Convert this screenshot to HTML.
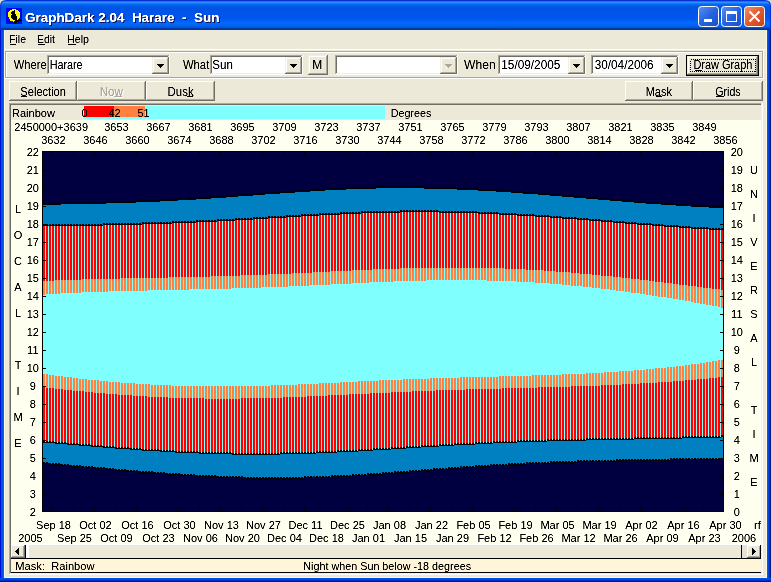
<!DOCTYPE html>
<html><head><meta charset="utf-8"><style>
html,body{margin:0;padding:0;width:771px;height:582px;overflow:hidden;background:#fff}
text{white-space:pre}
</style></head><body>
<svg width="771" height="582" viewBox="0 0 771 582" shape-rendering="crispEdges" style="position:absolute;left:0;top:0;font-family:'Liberation Sans', sans-serif">
<defs>
<linearGradient id="tb" x1="0" y1="0" x2="0" y2="1">
<stop offset="0" stop-color="#0058EE"/><stop offset="0.04" stop-color="#3593FF"/><stop offset="0.06" stop-color="#288EFF"/>
<stop offset="0.08" stop-color="#127DFF"/><stop offset="0.10" stop-color="#036FFC"/><stop offset="0.14" stop-color="#0262EE"/>
<stop offset="0.20" stop-color="#0057E5"/><stop offset="0.24" stop-color="#0054E3"/><stop offset="0.56" stop-color="#0055EB"/>
<stop offset="0.66" stop-color="#005BF5"/><stop offset="0.76" stop-color="#026AFE"/><stop offset="0.86" stop-color="#0062EF"/>
<stop offset="0.92" stop-color="#0052D6"/><stop offset="0.94" stop-color="#0040AB"/><stop offset="1" stop-color="#003092"/>
</linearGradient>
<linearGradient id="btn" x1="0" y1="0" x2="1" y2="1">
<stop offset="0" stop-color="#5C8FF5"/><stop offset="0.5" stop-color="#2663E0"/><stop offset="1" stop-color="#1C4FC8"/>
</linearGradient>
<linearGradient id="cls" x1="0" y1="0" x2="1" y2="1">
<stop offset="0" stop-color="#F09270"/><stop offset="0.5" stop-color="#E05A2E"/><stop offset="1" stop-color="#C8401C"/>
</linearGradient>
<filter id="cr" x="-5%" y="-20%" width="110%" height="140%"><feComponentTransfer><feFuncA type="linear" slope="1.6" intercept="-0.2"/></feComponentTransfer></filter>
</defs>
<rect x="0" y="0" width="771" height="582" fill="#FFFFFF"/>
<rect x="0" y="0" width="771" height="582" fill="#D8DCE4"/>
<path d="M0 6Q0 0 6 0H765Q771 0 771 6V582H0Z" fill="#0831D9" shape-rendering="auto"/>
<path d="M1 6Q1 1 6 1H765Q770 1 770 6V30H1Z" fill="url(#tb)" shape-rendering="auto"/>
<rect x="0" y="30" width="1" height="552" fill="#0010D0"/>
<rect x="1" y="30" width="1" height="552" fill="#0050E8"/>
<rect x="2" y="30" width="1" height="552" fill="#0050E8"/>
<rect x="3" y="30" width="1" height="552" fill="#1060F0"/>
<rect x="767" y="30" width="1" height="552" fill="#0A55F0"/>
<rect x="768" y="30" width="1" height="552" fill="#0045DC"/>
<rect x="769" y="30" width="1" height="552" fill="#0030B0"/>
<rect x="770" y="30" width="1" height="552" fill="#00188A"/>
<rect x="0" y="578" width="771" height="1" fill="#0050F0"/>
<rect x="0" y="579" width="771" height="1" fill="#0040E0"/>
<rect x="0" y="580" width="771" height="1" fill="#0030C0"/>
<rect x="0" y="581" width="771" height="1" fill="#001890"/>
<rect x="4" y="30" width="763" height="548" fill="#FFF8E0"/>
<rect x="5" y="30" width="761" height="547" fill="#ECE9D8"/>
<rect x="6" y="8" width="16" height="16" fill="#0000F8"/>
<rect x="12" y="9" width="1" height="1" fill="#FFFF00"/>
<rect x="13" y="9" width="1" height="1" fill="#FFFF00"/>
<rect x="14" y="9" width="1" height="1" fill="#FFFF00"/>
<rect x="15" y="9" width="1" height="1" fill="#FFFF00"/>
<rect x="10" y="10" width="1" height="1" fill="#FFFF00"/>
<rect x="11" y="10" width="1" height="1" fill="#FFFF00"/>
<rect x="12" y="10" width="1" height="1" fill="#FFFF00"/>
<rect x="13" y="10" width="1" height="1" fill="#FFFF00"/>
<rect x="14" y="10" width="1" height="1" fill="#000000"/>
<rect x="15" y="10" width="1" height="1" fill="#FFFF00"/>
<rect x="16" y="10" width="1" height="1" fill="#FFFF00"/>
<rect x="17" y="10" width="1" height="1" fill="#FFFF00"/>
<rect x="9" y="11" width="1" height="1" fill="#FFFF00"/>
<rect x="10" y="11" width="1" height="1" fill="#FFFF00"/>
<rect x="11" y="11" width="1" height="1" fill="#FFFF00"/>
<rect x="12" y="11" width="1" height="1" fill="#000000"/>
<rect x="13" y="11" width="1" height="1" fill="#000000"/>
<rect x="14" y="11" width="1" height="1" fill="#000000"/>
<rect x="15" y="11" width="1" height="1" fill="#FFFF00"/>
<rect x="16" y="11" width="1" height="1" fill="#FFFF00"/>
<rect x="17" y="11" width="1" height="1" fill="#FFFF00"/>
<rect x="18" y="11" width="1" height="1" fill="#FFFF00"/>
<rect x="8" y="12" width="1" height="1" fill="#FFFF00"/>
<rect x="9" y="12" width="1" height="1" fill="#FFFF00"/>
<rect x="10" y="12" width="1" height="1" fill="#FFFF00"/>
<rect x="11" y="12" width="1" height="1" fill="#000000"/>
<rect x="12" y="12" width="1" height="1" fill="#000000"/>
<rect x="13" y="12" width="1" height="1" fill="#000000"/>
<rect x="14" y="12" width="1" height="1" fill="#000000"/>
<rect x="15" y="12" width="1" height="1" fill="#FFFF00"/>
<rect x="16" y="12" width="1" height="1" fill="#FFFF00"/>
<rect x="17" y="12" width="1" height="1" fill="#FFFF00"/>
<rect x="18" y="12" width="1" height="1" fill="#FFFF00"/>
<rect x="19" y="12" width="1" height="1" fill="#FFFF00"/>
<rect x="8" y="13" width="1" height="1" fill="#FFFF00"/>
<rect x="9" y="13" width="1" height="1" fill="#FFFF00"/>
<rect x="10" y="13" width="1" height="1" fill="#FFFF00"/>
<rect x="11" y="13" width="1" height="1" fill="#000000"/>
<rect x="12" y="13" width="1" height="1" fill="#000000"/>
<rect x="13" y="13" width="1" height="1" fill="#000000"/>
<rect x="14" y="13" width="1" height="1" fill="#000000"/>
<rect x="15" y="13" width="1" height="1" fill="#FFFF00"/>
<rect x="16" y="13" width="1" height="1" fill="#FFFF00"/>
<rect x="17" y="13" width="1" height="1" fill="#FFFF00"/>
<rect x="18" y="13" width="1" height="1" fill="#FFFF00"/>
<rect x="19" y="13" width="1" height="1" fill="#FFFF00"/>
<rect x="8" y="14" width="1" height="1" fill="#FFFF00"/>
<rect x="9" y="14" width="1" height="1" fill="#FFFF00"/>
<rect x="10" y="14" width="1" height="1" fill="#FFFF00"/>
<rect x="11" y="14" width="1" height="1" fill="#FFFF00"/>
<rect x="12" y="14" width="1" height="1" fill="#000000"/>
<rect x="13" y="14" width="1" height="1" fill="#000000"/>
<rect x="14" y="14" width="1" height="1" fill="#000000"/>
<rect x="15" y="14" width="1" height="1" fill="#000000"/>
<rect x="16" y="14" width="1" height="1" fill="#FFFF00"/>
<rect x="17" y="14" width="1" height="1" fill="#FFFF00"/>
<rect x="18" y="14" width="1" height="1" fill="#FFFF00"/>
<rect x="19" y="14" width="1" height="1" fill="#FFFF00"/>
<rect x="8" y="15" width="1" height="1" fill="#FFFF00"/>
<rect x="9" y="15" width="1" height="1" fill="#FFFF00"/>
<rect x="10" y="15" width="1" height="1" fill="#FFFF00"/>
<rect x="11" y="15" width="1" height="1" fill="#000000"/>
<rect x="12" y="15" width="1" height="1" fill="#000000"/>
<rect x="13" y="15" width="1" height="1" fill="#000000"/>
<rect x="14" y="15" width="1" height="1" fill="#000000"/>
<rect x="15" y="15" width="1" height="1" fill="#000000"/>
<rect x="16" y="15" width="1" height="1" fill="#FFFF00"/>
<rect x="17" y="15" width="1" height="1" fill="#FFFF00"/>
<rect x="18" y="15" width="1" height="1" fill="#FFFF00"/>
<rect x="19" y="15" width="1" height="1" fill="#FFFF00"/>
<rect x="8" y="16" width="1" height="1" fill="#FFFF00"/>
<rect x="9" y="16" width="1" height="1" fill="#FFFF00"/>
<rect x="10" y="16" width="1" height="1" fill="#FFFF00"/>
<rect x="11" y="16" width="1" height="1" fill="#000000"/>
<rect x="12" y="16" width="1" height="1" fill="#000000"/>
<rect x="13" y="16" width="1" height="1" fill="#000000"/>
<rect x="14" y="16" width="1" height="1" fill="#000000"/>
<rect x="15" y="16" width="1" height="1" fill="#000000"/>
<rect x="16" y="16" width="1" height="1" fill="#000000"/>
<rect x="17" y="16" width="1" height="1" fill="#FFFF00"/>
<rect x="18" y="16" width="1" height="1" fill="#FFFF00"/>
<rect x="19" y="16" width="1" height="1" fill="#FFFF00"/>
<rect x="9" y="17" width="1" height="1" fill="#FFFF00"/>
<rect x="10" y="17" width="1" height="1" fill="#FFFF00"/>
<rect x="11" y="17" width="1" height="1" fill="#000000"/>
<rect x="12" y="17" width="1" height="1" fill="#000000"/>
<rect x="13" y="17" width="1" height="1" fill="#000000"/>
<rect x="14" y="17" width="1" height="1" fill="#000000"/>
<rect x="15" y="17" width="1" height="1" fill="#000000"/>
<rect x="16" y="17" width="1" height="1" fill="#000000"/>
<rect x="17" y="17" width="1" height="1" fill="#FFFF00"/>
<rect x="18" y="17" width="1" height="1" fill="#FFFF00"/>
<rect x="19" y="17" width="1" height="1" fill="#FFFF00"/>
<rect x="9" y="18" width="1" height="1" fill="#FFFF00"/>
<rect x="10" y="18" width="1" height="1" fill="#FFFF00"/>
<rect x="11" y="18" width="1" height="1" fill="#FFFF00"/>
<rect x="12" y="18" width="1" height="1" fill="#000000"/>
<rect x="13" y="18" width="1" height="1" fill="#000000"/>
<rect x="14" y="18" width="1" height="1" fill="#000000"/>
<rect x="15" y="18" width="1" height="1" fill="#000000"/>
<rect x="16" y="18" width="1" height="1" fill="#000000"/>
<rect x="17" y="18" width="1" height="1" fill="#FFFF00"/>
<rect x="18" y="18" width="1" height="1" fill="#FFFF00"/>
<rect x="10" y="19" width="1" height="1" fill="#FFFF00"/>
<rect x="11" y="19" width="1" height="1" fill="#FFFF00"/>
<rect x="12" y="19" width="1" height="1" fill="#FFFF00"/>
<rect x="13" y="19" width="1" height="1" fill="#000000"/>
<rect x="14" y="19" width="1" height="1" fill="#000000"/>
<rect x="15" y="19" width="1" height="1" fill="#000000"/>
<rect x="16" y="19" width="1" height="1" fill="#000000"/>
<rect x="17" y="19" width="1" height="1" fill="#FFFF00"/>
<rect x="10" y="20" width="1" height="1" fill="#FFFF00"/>
<rect x="11" y="20" width="1" height="1" fill="#FFFF00"/>
<rect x="12" y="20" width="1" height="1" fill="#FFFF00"/>
<rect x="13" y="20" width="1" height="1" fill="#FFFF00"/>
<rect x="14" y="20" width="1" height="1" fill="#FFFF00"/>
<rect x="15" y="20" width="1" height="1" fill="#000000"/>
<rect x="16" y="20" width="1" height="1" fill="#000000"/>
<rect x="17" y="20" width="1" height="1" fill="#000000"/>
<rect x="18" y="20" width="1" height="1" fill="#000000"/>
<rect x="19" y="20" width="1" height="1" fill="#000000"/>
<rect x="20" y="20" width="1" height="1" fill="#000000"/>
<rect x="21" y="20" width="1" height="1" fill="#000000"/>
<rect x="8" y="21" width="1" height="1" fill="#000000"/>
<rect x="13" y="21" width="1" height="1" fill="#FFFF00"/>
<rect x="14" y="21" width="1" height="1" fill="#000000"/>
<rect x="15" y="21" width="1" height="1" fill="#000000"/>
<rect x="16" y="21" width="1" height="1" fill="#000000"/>
<rect x="17" y="21" width="1" height="1" fill="#000000"/>
<rect x="18" y="21" width="1" height="1" fill="#000000"/>
<rect x="14" y="22" width="1" height="1" fill="#000000"/>
<rect x="15" y="22" width="1" height="1" fill="#000000"/>
<rect x="16" y="22" width="1" height="1" fill="#000000"/>
<rect x="15" y="23" width="1" height="1" fill="#000000"/>
<text x="26.00" y="23" font-size="13" fill="#0A1864" font-weight="bold" textLength="194.36" lengthAdjust="spacingAndGlyphs" filter="url(#cr)">GraphDark 2.04  Harare  -  Sun</text>
<text x="25.00" y="22" font-size="13" fill="#FFFFFF" font-weight="bold" textLength="194.36" lengthAdjust="spacingAndGlyphs" filter="url(#cr)">GraphDark 2.04  Harare  -  Sun</text>
<rect x="698.5" y="6.5" width="20" height="20" rx="3" fill="url(#btn)" stroke="#FFFFFF" stroke-width="1" shape-rendering="auto"/>
<rect x="721.5" y="6.5" width="20" height="20" rx="3" fill="url(#btn)" stroke="#FFFFFF" stroke-width="1" shape-rendering="auto"/>
<rect x="744.5" y="6.5" width="20" height="20" rx="3" fill="url(#cls)" stroke="#FFFFFF" stroke-width="1" shape-rendering="auto"/>
<rect x="704" y="19" width="8" height="3" fill="#FFFFFF"/>
<rect x="726.5" y="11.5" width="10" height="10" fill="none" stroke="#FFFFFF" stroke-width="1"/>
<rect x="727" y="11" width="10" height="3" fill="#FFFFFF"/>
<path d="M749.5 11.5l10 10M759.5 11.5l-10 10" stroke="#FFFFFF" stroke-width="2" shape-rendering="auto"/>
<text x="9.00" y="43" font-size="11" fill="#000" font-weight="normal" textLength="17.00" lengthAdjust="spacingAndGlyphs" filter="url(#cr)">File</text>
<text x="37.00" y="43" font-size="11" fill="#000" font-weight="normal" textLength="18.00" lengthAdjust="spacingAndGlyphs" filter="url(#cr)">Edit</text>
<text x="67.00" y="43" font-size="11" fill="#000" font-weight="normal" textLength="22.00" lengthAdjust="spacingAndGlyphs" filter="url(#cr)">Help</text>
<rect x="10" y="44" width="6" height="1" fill="#000"/>
<rect x="38" y="44" width="7" height="1" fill="#000"/>
<rect x="68" y="44" width="8" height="1" fill="#000"/>
<rect x="4" y="49" width="763" height="1" fill="#FFFFFF"/>
<rect x="5" y="51" width="758" height="1" fill="#ACA899"/>
<rect x="5" y="51" width="1" height="27" fill="#ACA899"/>
<rect x="6" y="52" width="757" height="1" fill="#FFFFFF"/>
<rect x="6" y="52" width="1" height="26" fill="#FFFFFF"/>
<rect x="5" y="77" width="758" height="1" fill="#ACA899"/>
<rect x="762" y="51" width="1" height="27" fill="#ACA899"/>
<rect x="5" y="78" width="759" height="1" fill="#FFFFFF"/>
<rect x="763" y="51" width="1" height="28" fill="#FFFFFF"/>
<text x="13.72" y="69" font-size="12" fill="#000" font-weight="normal" textLength="32.88" lengthAdjust="spacingAndGlyphs" filter="url(#cr)">Where</text>
<rect x="47" y="55" width="123" height="20" fill="#FFFFFF"/>
<rect x="47" y="55" width="123" height="1" fill="#ACA899"/>
<rect x="47" y="55" width="1" height="20" fill="#ACA899"/>
<rect x="48" y="56" width="121" height="1" fill="#716F64"/>
<rect x="48" y="56" width="1" height="18" fill="#716F64"/>
<rect x="47" y="74" width="123" height="1" fill="#FFFFFF"/>
<rect x="169" y="55" width="1" height="20" fill="#FFFFFF"/>
<rect x="48" y="73" width="121" height="1" fill="#F1EFE2"/>
<rect x="168" y="56" width="1" height="18" fill="#F1EFE2"/>
<rect x="152" y="57" width="17" height="17" fill="#ECE9D8"/>
<rect x="152" y="57" width="17" height="1" fill="#F1EFE2"/>
<rect x="152" y="57" width="1" height="17" fill="#F1EFE2"/>
<rect x="152" y="73" width="17" height="1" fill="#716F64"/>
<rect x="168" y="57" width="1" height="17" fill="#716F64"/>
<rect x="153" y="58" width="15" height="1" fill="#FFFFFF"/>
<rect x="153" y="58" width="1" height="15" fill="#FFFFFF"/>
<rect x="153" y="72" width="15" height="1" fill="#ACA899"/>
<rect x="167" y="58" width="1" height="15" fill="#ACA899"/>
<rect x="157" y="64" width="7" height="1" fill="#000"/>
<rect x="158" y="65" width="5" height="1" fill="#000"/>
<rect x="159" y="66" width="3" height="1" fill="#000"/>
<rect x="160" y="67" width="1" height="1" fill="#000"/>
<text x="49.64" y="69" font-size="12" fill="#000" font-weight="normal" textLength="33.00" lengthAdjust="spacingAndGlyphs" filter="url(#cr)">Harare</text>
<text x="182.96" y="69" font-size="12" fill="#000" font-weight="normal" textLength="26.32" lengthAdjust="spacingAndGlyphs" filter="url(#cr)">What</text>
<rect x="210" y="55" width="93" height="20" fill="#FFFFFF"/>
<rect x="210" y="55" width="93" height="1" fill="#ACA899"/>
<rect x="210" y="55" width="1" height="20" fill="#ACA899"/>
<rect x="211" y="56" width="91" height="1" fill="#716F64"/>
<rect x="211" y="56" width="1" height="18" fill="#716F64"/>
<rect x="210" y="74" width="93" height="1" fill="#FFFFFF"/>
<rect x="302" y="55" width="1" height="20" fill="#FFFFFF"/>
<rect x="211" y="73" width="91" height="1" fill="#F1EFE2"/>
<rect x="301" y="56" width="1" height="18" fill="#F1EFE2"/>
<rect x="285" y="57" width="17" height="17" fill="#ECE9D8"/>
<rect x="285" y="57" width="17" height="1" fill="#F1EFE2"/>
<rect x="285" y="57" width="1" height="17" fill="#F1EFE2"/>
<rect x="285" y="73" width="17" height="1" fill="#716F64"/>
<rect x="301" y="57" width="1" height="17" fill="#716F64"/>
<rect x="286" y="58" width="15" height="1" fill="#FFFFFF"/>
<rect x="286" y="58" width="1" height="15" fill="#FFFFFF"/>
<rect x="286" y="72" width="15" height="1" fill="#ACA899"/>
<rect x="300" y="58" width="1" height="15" fill="#ACA899"/>
<rect x="290" y="64" width="7" height="1" fill="#000"/>
<rect x="291" y="65" width="5" height="1" fill="#000"/>
<rect x="292" y="66" width="3" height="1" fill="#000"/>
<rect x="293" y="67" width="1" height="1" fill="#000"/>
<text x="212.36" y="69" font-size="12" fill="#000" font-weight="normal" textLength="20.64" lengthAdjust="spacingAndGlyphs" filter="url(#cr)">Sun</text>
<rect x="308" y="55" width="20" height="20" fill="#ECE9D8"/>
<rect x="308" y="55" width="20" height="1" fill="#F1EFE2"/>
<rect x="308" y="55" width="1" height="20" fill="#F1EFE2"/>
<rect x="308" y="74" width="20" height="1" fill="#716F64"/>
<rect x="327" y="55" width="1" height="20" fill="#716F64"/>
<rect x="309" y="56" width="18" height="1" fill="#FFFFFF"/>
<rect x="309" y="56" width="1" height="18" fill="#FFFFFF"/>
<rect x="309" y="73" width="18" height="1" fill="#ACA899"/>
<rect x="326" y="56" width="1" height="18" fill="#ACA899"/>
<text x="312.32" y="69" font-size="12" fill="#000" font-weight="normal" textLength="10.04" lengthAdjust="spacingAndGlyphs" filter="url(#cr)">M</text>
<rect x="335" y="55" width="123" height="20" fill="#FFFFFF"/>
<rect x="335" y="55" width="123" height="1" fill="#ACA899"/>
<rect x="335" y="55" width="1" height="20" fill="#ACA899"/>
<rect x="336" y="56" width="121" height="1" fill="#716F64"/>
<rect x="336" y="56" width="1" height="18" fill="#716F64"/>
<rect x="335" y="74" width="123" height="1" fill="#FFFFFF"/>
<rect x="457" y="55" width="1" height="20" fill="#FFFFFF"/>
<rect x="336" y="73" width="121" height="1" fill="#F1EFE2"/>
<rect x="456" y="56" width="1" height="18" fill="#F1EFE2"/>
<rect x="440" y="57" width="17" height="17" fill="#ECE9D8"/>
<rect x="440" y="57" width="17" height="1" fill="#F1EFE2"/>
<rect x="440" y="57" width="1" height="17" fill="#F1EFE2"/>
<rect x="440" y="73" width="17" height="1" fill="#716F64"/>
<rect x="456" y="57" width="1" height="17" fill="#716F64"/>
<rect x="441" y="58" width="15" height="1" fill="#FFFFFF"/>
<rect x="441" y="58" width="1" height="15" fill="#FFFFFF"/>
<rect x="441" y="72" width="15" height="1" fill="#ACA899"/>
<rect x="455" y="58" width="1" height="15" fill="#ACA899"/>
<rect x="445" y="64" width="7" height="1" fill="#ACA899"/>
<rect x="446" y="65" width="5" height="1" fill="#ACA899"/>
<rect x="447" y="66" width="3" height="1" fill="#ACA899"/>
<rect x="448" y="67" width="1" height="1" fill="#ACA899"/>
<rect x="446" y="68" width="1" height="1" fill="#FFFFFF"/>
<rect x="449" y="67" width="1" height="1" fill="#FFFFFF"/>
<text x="464.08" y="69" font-size="12" fill="#000" font-weight="normal" textLength="31.56" lengthAdjust="spacingAndGlyphs" filter="url(#cr)">When</text>
<rect x="498" y="55" width="88" height="20" fill="#FFFFFF"/>
<rect x="498" y="55" width="88" height="1" fill="#ACA899"/>
<rect x="498" y="55" width="1" height="20" fill="#ACA899"/>
<rect x="499" y="56" width="86" height="1" fill="#716F64"/>
<rect x="499" y="56" width="1" height="18" fill="#716F64"/>
<rect x="498" y="74" width="88" height="1" fill="#FFFFFF"/>
<rect x="585" y="55" width="1" height="20" fill="#FFFFFF"/>
<rect x="499" y="73" width="86" height="1" fill="#F1EFE2"/>
<rect x="584" y="56" width="1" height="18" fill="#F1EFE2"/>
<rect x="568" y="57" width="17" height="17" fill="#ECE9D8"/>
<rect x="568" y="57" width="17" height="1" fill="#F1EFE2"/>
<rect x="568" y="57" width="1" height="17" fill="#F1EFE2"/>
<rect x="568" y="73" width="17" height="1" fill="#716F64"/>
<rect x="584" y="57" width="1" height="17" fill="#716F64"/>
<rect x="569" y="58" width="15" height="1" fill="#FFFFFF"/>
<rect x="569" y="58" width="1" height="15" fill="#FFFFFF"/>
<rect x="569" y="72" width="15" height="1" fill="#ACA899"/>
<rect x="583" y="58" width="1" height="15" fill="#ACA899"/>
<rect x="573" y="64" width="7" height="1" fill="#000"/>
<rect x="574" y="65" width="5" height="1" fill="#000"/>
<rect x="575" y="66" width="3" height="1" fill="#000"/>
<rect x="576" y="67" width="1" height="1" fill="#000"/>
<text x="501.32" y="69" font-size="12" fill="#000" font-weight="normal" textLength="59.04" lengthAdjust="spacingAndGlyphs" filter="url(#cr)">15/09/2005</text>
<rect x="591" y="55" width="88" height="20" fill="#FFFFFF"/>
<rect x="591" y="55" width="88" height="1" fill="#ACA899"/>
<rect x="591" y="55" width="1" height="20" fill="#ACA899"/>
<rect x="592" y="56" width="86" height="1" fill="#716F64"/>
<rect x="592" y="56" width="1" height="18" fill="#716F64"/>
<rect x="591" y="74" width="88" height="1" fill="#FFFFFF"/>
<rect x="678" y="55" width="1" height="20" fill="#FFFFFF"/>
<rect x="592" y="73" width="86" height="1" fill="#F1EFE2"/>
<rect x="677" y="56" width="1" height="18" fill="#F1EFE2"/>
<rect x="661" y="57" width="17" height="17" fill="#ECE9D8"/>
<rect x="661" y="57" width="17" height="1" fill="#F1EFE2"/>
<rect x="661" y="57" width="1" height="17" fill="#F1EFE2"/>
<rect x="661" y="73" width="17" height="1" fill="#716F64"/>
<rect x="677" y="57" width="1" height="17" fill="#716F64"/>
<rect x="662" y="58" width="15" height="1" fill="#FFFFFF"/>
<rect x="662" y="58" width="1" height="15" fill="#FFFFFF"/>
<rect x="662" y="72" width="15" height="1" fill="#ACA899"/>
<rect x="676" y="58" width="1" height="15" fill="#ACA899"/>
<rect x="666" y="64" width="7" height="1" fill="#000"/>
<rect x="667" y="65" width="5" height="1" fill="#000"/>
<rect x="668" y="66" width="3" height="1" fill="#000"/>
<rect x="669" y="67" width="1" height="1" fill="#000"/>
<text x="594.68" y="69" font-size="12" fill="#000" font-weight="normal" textLength="58.96" lengthAdjust="spacingAndGlyphs" filter="url(#cr)">30/04/2006</text>
<rect x="686" y="55" width="73" height="21" fill="#000"/>
<rect x="687" y="56" width="71" height="19" fill="#ECE9D8"/>
<rect x="687" y="56" width="71" height="1" fill="#F1EFE2"/>
<rect x="687" y="56" width="1" height="19" fill="#F1EFE2"/>
<rect x="687" y="74" width="71" height="1" fill="#716F64"/>
<rect x="757" y="56" width="1" height="19" fill="#716F64"/>
<rect x="688" y="57" width="69" height="1" fill="#FFFFFF"/>
<rect x="688" y="57" width="1" height="17" fill="#FFFFFF"/>
<rect x="688" y="73" width="69" height="1" fill="#ACA899"/>
<rect x="756" y="57" width="1" height="17" fill="#ACA899"/>
<rect x="690.5" y="59.5" width="65" height="12" fill="none" stroke="#000" stroke-dasharray="1 1" stroke-width="1"/>
<text x="693.42" y="69" font-size="12" fill="#000" font-weight="normal" textLength="58.94" lengthAdjust="spacingAndGlyphs" filter="url(#cr)">Draw Graph</text>
<rect x="695" y="70" width="7" height="1" fill="#000"/>
<rect x="9" y="81" width="68" height="20" fill="#ECE9D8"/>
<rect x="9" y="81" width="68" height="1" fill="#FFFFFF"/>
<rect x="9" y="81" width="1" height="20" fill="#FFFFFF"/>
<rect x="9" y="100" width="68" height="1" fill="#716F64"/>
<rect x="76" y="81" width="1" height="20" fill="#716F64"/>
<rect x="10" y="99" width="66" height="1" fill="#ACA899"/>
<rect x="75" y="82" width="1" height="18" fill="#ACA899"/>
<text x="20.36" y="96" font-size="12" fill="#000" font-weight="normal" textLength="45.60" lengthAdjust="spacingAndGlyphs" filter="url(#cr)">Selection</text>
<rect x="21" y="96" width="6" height="1" fill="#000"/>
<rect x="77" y="81" width="69" height="20" fill="#ECE9D8"/>
<rect x="77" y="81" width="69" height="1" fill="#FFFFFF"/>
<rect x="77" y="81" width="1" height="20" fill="#FFFFFF"/>
<rect x="77" y="100" width="69" height="1" fill="#716F64"/>
<rect x="145" y="81" width="1" height="20" fill="#716F64"/>
<rect x="78" y="99" width="67" height="1" fill="#ACA899"/>
<rect x="144" y="82" width="1" height="18" fill="#ACA899"/>
<text x="100.68" y="97" font-size="12" fill="#FFFFFF" font-weight="normal" textLength="23.32" lengthAdjust="spacingAndGlyphs" filter="url(#cr)">Now</text>
<text x="99.68" y="96" font-size="12" fill="#ACA899" font-weight="normal" textLength="23.32" lengthAdjust="spacingAndGlyphs" filter="url(#cr)">Now</text>
<rect x="115" y="97" width="8" height="1" fill="#FFFFFF"/>
<rect x="114" y="96" width="8" height="1" fill="#ACA899"/>
<rect x="146" y="81" width="69" height="20" fill="#ECE9D8"/>
<rect x="146" y="81" width="69" height="1" fill="#FFFFFF"/>
<rect x="146" y="81" width="1" height="20" fill="#FFFFFF"/>
<rect x="146" y="100" width="69" height="1" fill="#716F64"/>
<rect x="214" y="81" width="1" height="20" fill="#716F64"/>
<rect x="147" y="99" width="67" height="1" fill="#ACA899"/>
<rect x="213" y="82" width="1" height="18" fill="#ACA899"/>
<text x="167.60" y="96" font-size="12" fill="#000" font-weight="normal" textLength="26.00" lengthAdjust="spacingAndGlyphs" filter="url(#cr)">Dusk</text>
<rect x="187" y="96" width="6" height="1" fill="#000"/>
<rect x="625" y="81" width="68" height="20" fill="#ECE9D8"/>
<rect x="625" y="81" width="68" height="1" fill="#FFFFFF"/>
<rect x="625" y="81" width="1" height="20" fill="#FFFFFF"/>
<rect x="625" y="100" width="68" height="1" fill="#716F64"/>
<rect x="692" y="81" width="1" height="20" fill="#716F64"/>
<rect x="626" y="99" width="66" height="1" fill="#ACA899"/>
<rect x="691" y="82" width="1" height="18" fill="#ACA899"/>
<text x="645.64" y="96" font-size="12" fill="#000" font-weight="normal" textLength="26.36" lengthAdjust="spacingAndGlyphs" filter="url(#cr)">Mask</text>
<rect x="656" y="96" width="6" height="1" fill="#000"/>
<rect x="693" y="81" width="70" height="20" fill="#ECE9D8"/>
<rect x="693" y="81" width="70" height="1" fill="#FFFFFF"/>
<rect x="693" y="81" width="1" height="20" fill="#FFFFFF"/>
<rect x="693" y="100" width="70" height="1" fill="#716F64"/>
<rect x="762" y="81" width="1" height="20" fill="#716F64"/>
<rect x="694" y="99" width="68" height="1" fill="#ACA899"/>
<rect x="761" y="82" width="1" height="18" fill="#ACA899"/>
<text x="715.28" y="96" font-size="12" fill="#000" font-weight="normal" textLength="25.36" lengthAdjust="spacingAndGlyphs" filter="url(#cr)">Grids</text>
<rect x="716" y="96" width="8" height="1" fill="#000"/>
<rect x="9" y="103" width="754" height="472" fill="#FFFFFF"/>
<rect x="9" y="103" width="753" height="471" fill="#ACA899"/>
<rect x="10" y="104" width="752" height="470" fill="#F1EFE2"/>
<rect x="10" y="104" width="751" height="469" fill="#716F64"/>
<rect x="11" y="105" width="750" height="468" fill="#FFFFF0"/>
<rect x="11" y="105" width="750" height="15" fill="#ECE9D8"/>
<text x="12.00" y="117" font-size="11" fill="#000" font-weight="normal" textLength="42.92" lengthAdjust="spacingAndGlyphs" filter="url(#cr)">Rainbow</text>
<rect x="84" y="106" width="301" height="13" fill="#80FFFF"/>
<rect x="84" y="106" width="30" height="11" fill="#FF0000"/>
<rect x="114" y="106" width="31" height="11" fill="#FF8040"/>
<text x="84.5" y="117" font-size="11" text-anchor="middle" fill="#000" font-weight="normal" filter="url(#cr)" >0</text>
<text x="114.5" y="117" font-size="11" text-anchor="middle" fill="#000" font-weight="normal" filter="url(#cr)" >42</text>
<text x="143.5" y="117" font-size="11" text-anchor="middle" fill="#000" font-weight="normal" filter="url(#cr)" >51</text>
<text x="390.64" y="117" font-size="11" fill="#000" font-weight="normal" textLength="40.68" lengthAdjust="spacingAndGlyphs" filter="url(#cr)">Degrees</text>
<text x="88" y="131" font-size="11" text-anchor="end" fill="#000" font-weight="normal" filter="url(#cr)" >2450000+3639</text>
<text x="116.5" y="131" font-size="11" text-anchor="middle" fill="#000" font-weight="normal" filter="url(#cr)" >3653</text>
<text x="158.5" y="131" font-size="11" text-anchor="middle" fill="#000" font-weight="normal" filter="url(#cr)" >3667</text>
<text x="200.5" y="131" font-size="11" text-anchor="middle" fill="#000" font-weight="normal" filter="url(#cr)" >3681</text>
<text x="242.5" y="131" font-size="11" text-anchor="middle" fill="#000" font-weight="normal" filter="url(#cr)" >3695</text>
<text x="284.5" y="131" font-size="11" text-anchor="middle" fill="#000" font-weight="normal" filter="url(#cr)" >3709</text>
<text x="326.5" y="131" font-size="11" text-anchor="middle" fill="#000" font-weight="normal" filter="url(#cr)" >3723</text>
<text x="368.5" y="131" font-size="11" text-anchor="middle" fill="#000" font-weight="normal" filter="url(#cr)" >3737</text>
<text x="410.5" y="131" font-size="11" text-anchor="middle" fill="#000" font-weight="normal" filter="url(#cr)" >3751</text>
<text x="452.5" y="131" font-size="11" text-anchor="middle" fill="#000" font-weight="normal" filter="url(#cr)" >3765</text>
<text x="494.5" y="131" font-size="11" text-anchor="middle" fill="#000" font-weight="normal" filter="url(#cr)" >3779</text>
<text x="536.5" y="131" font-size="11" text-anchor="middle" fill="#000" font-weight="normal" filter="url(#cr)" >3793</text>
<text x="578.5" y="131" font-size="11" text-anchor="middle" fill="#000" font-weight="normal" filter="url(#cr)" >3807</text>
<text x="620.5" y="131" font-size="11" text-anchor="middle" fill="#000" font-weight="normal" filter="url(#cr)" >3821</text>
<text x="662.5" y="131" font-size="11" text-anchor="middle" fill="#000" font-weight="normal" filter="url(#cr)" >3835</text>
<text x="704.5" y="131" font-size="11" text-anchor="middle" fill="#000" font-weight="normal" filter="url(#cr)" >3849</text>
<text x="53.5" y="144" font-size="11" text-anchor="middle" fill="#000" font-weight="normal" filter="url(#cr)" >3632</text>
<text x="95.5" y="144" font-size="11" text-anchor="middle" fill="#000" font-weight="normal" filter="url(#cr)" >3646</text>
<text x="137.5" y="144" font-size="11" text-anchor="middle" fill="#000" font-weight="normal" filter="url(#cr)" >3660</text>
<text x="179.5" y="144" font-size="11" text-anchor="middle" fill="#000" font-weight="normal" filter="url(#cr)" >3674</text>
<text x="221.5" y="144" font-size="11" text-anchor="middle" fill="#000" font-weight="normal" filter="url(#cr)" >3688</text>
<text x="263.5" y="144" font-size="11" text-anchor="middle" fill="#000" font-weight="normal" filter="url(#cr)" >3702</text>
<text x="305.5" y="144" font-size="11" text-anchor="middle" fill="#000" font-weight="normal" filter="url(#cr)" >3716</text>
<text x="347.5" y="144" font-size="11" text-anchor="middle" fill="#000" font-weight="normal" filter="url(#cr)" >3730</text>
<text x="389.5" y="144" font-size="11" text-anchor="middle" fill="#000" font-weight="normal" filter="url(#cr)" >3744</text>
<text x="431.5" y="144" font-size="11" text-anchor="middle" fill="#000" font-weight="normal" filter="url(#cr)" >3758</text>
<text x="473.5" y="144" font-size="11" text-anchor="middle" fill="#000" font-weight="normal" filter="url(#cr)" >3772</text>
<text x="515.5" y="144" font-size="11" text-anchor="middle" fill="#000" font-weight="normal" filter="url(#cr)" >3786</text>
<text x="557.5" y="144" font-size="11" text-anchor="middle" fill="#000" font-weight="normal" filter="url(#cr)" >3800</text>
<text x="599.5" y="144" font-size="11" text-anchor="middle" fill="#000" font-weight="normal" filter="url(#cr)" >3814</text>
<text x="641.5" y="144" font-size="11" text-anchor="middle" fill="#000" font-weight="normal" filter="url(#cr)" >3828</text>
<text x="683.5" y="144" font-size="11" text-anchor="middle" fill="#000" font-weight="normal" filter="url(#cr)" >3842</text>
<text x="725.5" y="144" font-size="11" text-anchor="middle" fill="#000" font-weight="normal" filter="url(#cr)" >3856</text>
<g>
<rect x="42" y="151" width="682" height="361" fill="#000000"/>
<rect x="43" y="152" width="680" height="359" fill="#000040"/>
<path fill="#0080C0" d="M43 205h3v258h-3zM46 205h3v258h-3zM49 205h3v259h-3zM52 205h3v259h-3zM55 205h3v259h-3zM58 205h3v259h-3zM61 204h3v261h-3zM64 204h3v261h-3zM67 204h3v261h-3zM70 204h3v262h-3zM73 204h3v262h-3zM76 204h3v262h-3zM79 204h3v262h-3zM82 204h3v263h-3zM85 204h3v263h-3zM88 204h3v263h-3zM91 204h3v263h-3zM94 204h3v264h-3zM97 204h3v264h-3zM100 204h3v264h-3zM103 204h3v264h-3zM106 203h3v266h-3zM109 203h3v266h-3zM112 203h3v266h-3zM115 203h3v267h-3zM118 203h3v267h-3zM121 203h3v267h-3zM124 203h3v267h-3zM127 203h3v268h-3zM130 203h3v268h-3zM133 203h3v268h-3zM136 202h3v269h-3zM139 202h3v270h-3zM142 202h3v270h-3zM145 202h3v270h-3zM148 202h3v270h-3zM151 202h3v270h-3zM154 202h3v271h-3zM157 202h3v271h-3zM160 201h3v272h-3zM163 201h3v272h-3zM166 201h3v273h-3zM169 201h3v273h-3zM172 201h3v273h-3zM175 201h3v273h-3zM178 200h3v274h-3zM181 200h3v275h-3zM184 200h3v275h-3zM187 200h3v275h-3zM190 200h3v275h-3zM193 200h3v275h-3zM196 199h3v277h-3zM199 199h3v277h-3zM202 199h3v277h-3zM205 199h3v277h-3zM208 199h3v277h-3zM211 198h3v278h-3zM214 198h3v278h-3zM217 198h3v279h-3zM220 198h3v279h-3zM223 198h3v279h-3zM226 197h3v280h-3zM229 197h3v280h-3zM232 197h3v280h-3zM235 197h3v280h-3zM238 196h3v281h-3zM241 196h3v281h-3zM244 196h3v282h-3zM247 196h3v282h-3zM250 196h3v282h-3zM253 195h3v283h-3zM256 195h3v283h-3zM259 195h3v283h-3zM262 195h3v283h-3zM265 194h3v284h-3zM268 194h3v284h-3zM271 194h3v284h-3zM274 194h3v284h-3zM277 194h3v284h-3zM280 193h3v285h-3zM283 193h3v285h-3zM286 193h3v285h-3zM289 193h3v285h-3zM292 193h3v285h-3zM295 192h3v286h-3zM298 192h3v286h-3zM301 192h3v286h-3zM304 192h3v285h-3zM307 192h3v285h-3zM310 191h3v286h-3zM313 191h3v286h-3zM316 191h3v286h-3zM319 191h3v286h-3zM322 191h3v286h-3zM325 190h3v287h-3zM328 190h3v287h-3zM331 190h3v286h-3zM334 190h3v286h-3zM337 190h3v286h-3zM340 190h3v286h-3zM343 190h3v286h-3zM346 189h3v287h-3zM349 189h3v287h-3zM352 189h3v286h-3zM355 189h3v286h-3zM358 189h3v286h-3zM361 189h3v286h-3zM364 189h3v286h-3zM367 189h3v285h-3zM370 189h3v285h-3zM373 189h3v285h-3zM376 188h3v286h-3zM379 188h3v286h-3zM382 188h3v285h-3zM385 188h3v285h-3zM388 188h3v285h-3zM391 188h3v285h-3zM394 188h3v284h-3zM397 188h3v284h-3zM400 188h3v284h-3zM403 188h3v284h-3zM406 188h3v284h-3zM409 188h3v283h-3zM412 188h3v283h-3zM415 188h3v283h-3zM418 188h3v283h-3zM421 188h3v282h-3zM424 189h3v281h-3zM427 189h3v281h-3zM430 189h3v281h-3zM433 189h3v280h-3zM436 189h3v280h-3zM439 189h3v280h-3zM442 189h3v280h-3zM445 189h3v280h-3zM448 189h3v279h-3zM451 189h3v279h-3zM454 189h3v279h-3zM457 190h3v278h-3zM460 190h3v277h-3zM463 190h3v277h-3zM466 190h3v277h-3zM469 190h3v277h-3zM472 190h3v277h-3zM475 190h3v276h-3zM478 191h3v275h-3zM481 191h3v275h-3zM484 191h3v275h-3zM487 191h3v275h-3zM490 191h3v274h-3zM493 191h3v274h-3zM496 192h3v273h-3zM499 192h3v273h-3zM502 192h3v273h-3zM505 192h3v273h-3zM508 192h3v272h-3zM511 193h3v271h-3zM514 193h3v271h-3zM517 193h3v271h-3zM520 193h3v271h-3zM523 194h3v270h-3zM526 194h3v269h-3zM529 194h3v269h-3zM532 194h3v269h-3zM535 194h3v269h-3zM538 195h3v268h-3zM541 195h3v268h-3zM544 195h3v268h-3zM547 195h3v268h-3zM550 196h3v266h-3zM553 196h3v266h-3zM556 196h3v266h-3zM559 196h3v266h-3zM562 197h3v265h-3zM565 197h3v265h-3zM568 197h3v265h-3zM571 197h3v265h-3zM574 198h3v264h-3zM577 198h3v263h-3zM580 198h3v263h-3zM583 198h3v263h-3zM586 199h3v262h-3zM589 199h3v262h-3zM592 199h3v262h-3zM595 199h3v262h-3zM598 200h3v261h-3zM601 200h3v261h-3zM604 200h3v261h-3zM607 200h3v261h-3zM610 201h3v260h-3zM613 201h3v260h-3zM616 201h3v259h-3zM619 201h3v259h-3zM622 202h3v258h-3zM625 202h3v258h-3zM628 202h3v258h-3zM631 202h3v258h-3zM634 203h3v257h-3zM637 203h3v257h-3zM640 203h3v257h-3zM643 203h3v257h-3zM646 204h3v256h-3zM649 204h3v256h-3zM652 204h3v256h-3zM655 204h3v256h-3zM658 204h3v256h-3zM661 205h3v255h-3zM664 205h3v255h-3zM667 205h3v255h-3zM670 205h3v254h-3zM673 205h3v254h-3zM676 206h3v253h-3zM679 206h3v253h-3zM682 206h3v253h-3zM685 206h3v253h-3zM688 206h3v253h-3zM691 207h3v252h-3zM694 207h3v252h-3zM697 207h3v252h-3zM700 207h3v252h-3zM703 207h3v252h-3zM706 207h3v252h-3zM709 208h3v251h-3zM712 208h3v251h-3zM715 208h3v251h-3zM718 208h3v251h-3zM721 208h3v251h-3z"/>
<path fill="#80FFFF" d="M43 226h3v216h-3zM46 226h3v216h-3zM49 226h3v216h-3zM52 226h3v216h-3zM55 226h3v217h-3zM58 226h3v217h-3zM61 226h3v217h-3zM64 226h3v217h-3zM67 226h3v218h-3zM70 226h3v218h-3zM73 226h3v218h-3zM76 226h3v218h-3zM79 226h3v219h-3zM82 226h3v219h-3zM85 226h3v219h-3zM88 226h3v219h-3zM91 226h3v220h-3zM94 226h3v220h-3zM97 226h3v220h-3zM100 226h3v220h-3zM103 225h3v222h-3zM106 225h3v222h-3zM109 225h3v222h-3zM112 225h3v222h-3zM115 225h3v223h-3zM118 225h3v223h-3zM121 225h3v223h-3zM124 225h3v223h-3zM127 225h3v223h-3zM130 225h3v224h-3zM133 225h3v224h-3zM136 225h3v224h-3zM139 225h3v224h-3zM142 224h3v226h-3zM145 224h3v226h-3zM148 224h3v226h-3zM151 224h3v226h-3zM154 224h3v226h-3zM157 224h3v226h-3zM160 224h3v227h-3zM163 224h3v227h-3zM166 224h3v227h-3zM169 224h3v227h-3zM172 223h3v228h-3zM175 223h3v229h-3zM178 223h3v229h-3zM181 223h3v229h-3zM184 223h3v229h-3zM187 223h3v229h-3zM190 223h3v229h-3zM193 223h3v229h-3zM196 222h3v230h-3zM199 222h3v231h-3zM202 222h3v231h-3zM205 222h3v231h-3zM208 222h3v231h-3zM211 222h3v231h-3zM214 222h3v231h-3zM217 221h3v232h-3zM220 221h3v232h-3zM223 221h3v232h-3zM226 221h3v232h-3zM229 221h3v232h-3zM232 221h3v233h-3zM235 220h3v234h-3zM238 220h3v234h-3zM241 220h3v234h-3zM244 220h3v234h-3zM247 220h3v234h-3zM250 220h3v234h-3zM253 219h3v235h-3zM256 219h3v235h-3zM259 219h3v235h-3zM262 219h3v235h-3zM265 219h3v235h-3zM268 218h3v236h-3zM271 218h3v236h-3zM274 218h3v236h-3zM277 218h3v236h-3zM280 218h3v235h-3zM283 218h3v235h-3zM286 217h3v236h-3zM289 217h3v236h-3zM292 217h3v236h-3zM295 217h3v236h-3zM298 217h3v236h-3zM301 216h3v237h-3zM304 216h3v237h-3zM307 216h3v237h-3zM310 216h3v237h-3zM313 216h3v237h-3zM316 216h3v236h-3zM319 215h3v237h-3zM322 215h3v237h-3zM325 215h3v237h-3zM328 215h3v237h-3zM331 215h3v237h-3zM334 215h3v237h-3zM337 215h3v236h-3zM340 214h3v237h-3zM343 214h3v237h-3zM346 214h3v237h-3zM349 214h3v237h-3zM352 214h3v237h-3zM355 214h3v237h-3zM358 214h3v236h-3zM361 213h3v237h-3zM364 213h3v237h-3zM367 213h3v237h-3zM370 213h3v237h-3zM373 213h3v236h-3zM376 213h3v236h-3zM379 213h3v236h-3zM382 213h3v236h-3zM385 213h3v236h-3zM388 213h3v236h-3zM391 213h3v235h-3zM394 213h3v235h-3zM397 213h3v235h-3zM400 212h3v236h-3zM403 212h3v236h-3zM406 212h3v235h-3zM409 212h3v235h-3zM412 212h3v235h-3zM415 212h3v235h-3zM418 212h3v235h-3zM421 212h3v234h-3zM424 212h3v234h-3zM427 212h3v234h-3zM430 212h3v234h-3zM433 212h3v234h-3zM436 212h3v234h-3zM439 213h3v232h-3zM442 213h3v232h-3zM445 213h3v232h-3zM448 213h3v232h-3zM451 213h3v232h-3zM454 213h3v231h-3zM457 213h3v231h-3zM460 213h3v231h-3zM463 213h3v231h-3zM466 213h3v231h-3zM469 213h3v231h-3zM472 213h3v231h-3zM475 213h3v230h-3zM478 214h3v229h-3zM481 214h3v229h-3zM484 214h3v229h-3zM487 214h3v229h-3zM490 214h3v229h-3zM493 214h3v228h-3zM496 214h3v228h-3zM499 215h3v227h-3zM502 215h3v227h-3zM505 215h3v227h-3zM508 215h3v227h-3zM511 215h3v227h-3zM514 215h3v227h-3zM517 216h3v225h-3zM520 216h3v225h-3zM523 216h3v225h-3zM526 216h3v225h-3zM529 216h3v225h-3zM532 216h3v225h-3zM535 217h3v224h-3zM538 217h3v224h-3zM541 217h3v224h-3zM544 217h3v224h-3zM547 217h3v223h-3zM550 218h3v222h-3zM553 218h3v222h-3zM556 218h3v222h-3zM559 218h3v222h-3zM562 219h3v221h-3zM565 219h3v221h-3zM568 219h3v221h-3zM571 219h3v221h-3zM574 219h3v221h-3zM577 220h3v220h-3zM580 220h3v220h-3zM583 220h3v220h-3zM586 220h3v219h-3zM589 221h3v218h-3zM592 221h3v218h-3zM595 221h3v218h-3zM598 221h3v218h-3zM601 222h3v217h-3zM604 222h3v217h-3zM607 222h3v217h-3zM610 222h3v217h-3zM613 223h3v216h-3zM616 223h3v216h-3zM619 223h3v216h-3zM622 223h3v216h-3zM625 224h3v215h-3zM628 224h3v215h-3zM631 224h3v215h-3zM634 224h3v214h-3zM637 225h3v213h-3zM640 225h3v213h-3zM643 225h3v213h-3zM646 225h3v213h-3zM649 225h3v213h-3zM652 226h3v212h-3zM655 226h3v212h-3zM658 226h3v212h-3zM661 226h3v212h-3zM664 227h3v211h-3zM667 227h3v211h-3zM670 227h3v211h-3zM673 227h3v211h-3zM676 227h3v211h-3zM679 228h3v210h-3zM682 228h3v209h-3zM685 228h3v209h-3zM688 228h3v209h-3zM691 229h3v208h-3zM694 229h3v208h-3zM697 229h3v208h-3zM700 229h3v208h-3zM703 229h3v208h-3zM706 229h3v208h-3zM709 230h3v207h-3zM712 230h3v207h-3zM715 230h3v207h-3zM718 230h3v207h-3zM721 230h3v206h-3z"/>
<path fill="#FF0000" d="M43 226h2v55h-2zM43 387h2v54h-2zM46 226h2v55h-2zM46 388h2v53h-2zM49 226h2v55h-2zM49 388h2v53h-2zM52 226h2v55h-2zM52 388h2v53h-2zM55 226h2v54h-2zM55 389h2v53h-2zM58 226h2v54h-2zM58 389h2v53h-2zM61 226h2v54h-2zM61 389h2v53h-2zM64 226h2v54h-2zM64 390h2v52h-2zM67 226h2v54h-2zM67 390h2v53h-2zM70 226h2v54h-2zM70 390h2v53h-2zM73 226h2v54h-2zM73 391h2v52h-2zM76 226h2v54h-2zM76 391h2v52h-2zM79 226h2v54h-2zM79 391h2v53h-2zM82 226h2v53h-2zM82 391h2v53h-2zM85 226h2v53h-2zM85 392h2v52h-2zM88 226h2v53h-2zM88 392h2v52h-2zM91 226h2v53h-2zM91 392h2v53h-2zM94 226h2v53h-2zM94 393h2v52h-2zM97 226h2v53h-2zM97 393h2v52h-2zM100 226h2v53h-2zM100 393h2v52h-2zM103 225h2v54h-2zM103 393h2v53h-2zM106 225h2v54h-2zM106 394h2v52h-2zM109 225h2v54h-2zM109 394h2v52h-2zM112 225h2v54h-2zM112 394h2v52h-2zM115 225h2v54h-2zM115 394h2v53h-2zM118 225h2v54h-2zM118 395h2v52h-2zM121 225h2v53h-2zM121 395h2v52h-2zM124 225h2v53h-2zM124 395h2v52h-2zM127 225h2v53h-2zM127 395h2v52h-2zM130 225h2v53h-2zM130 395h2v53h-2zM133 225h2v53h-2zM133 396h2v52h-2zM136 225h2v53h-2zM136 396h2v52h-2zM139 225h2v53h-2zM139 396h2v52h-2zM142 224h2v54h-2zM142 396h2v53h-2zM145 224h2v54h-2zM145 396h2v53h-2zM148 224h2v54h-2zM148 397h2v52h-2zM151 224h2v54h-2zM151 397h2v52h-2zM154 224h2v54h-2zM154 397h2v52h-2zM157 224h2v54h-2zM157 397h2v52h-2zM160 224h2v54h-2zM160 397h2v53h-2zM163 224h2v54h-2zM163 397h2v53h-2zM166 224h2v54h-2zM166 397h2v53h-2zM169 224h2v53h-2zM169 398h2v52h-2zM172 223h2v54h-2zM172 398h2v52h-2zM175 223h2v54h-2zM175 398h2v53h-2zM178 223h2v54h-2zM178 398h2v53h-2zM181 223h2v54h-2zM181 398h2v53h-2zM184 223h2v54h-2zM184 398h2v53h-2zM187 223h2v54h-2zM187 398h2v53h-2zM190 223h2v54h-2zM190 398h2v53h-2zM193 223h2v54h-2zM193 398h2v53h-2zM196 222h2v55h-2zM196 398h2v53h-2zM199 222h2v55h-2zM199 398h2v54h-2zM202 222h2v55h-2zM202 398h2v54h-2zM205 222h2v55h-2zM205 399h2v53h-2zM208 222h2v55h-2zM208 399h2v53h-2zM211 222h2v54h-2zM211 399h2v53h-2zM214 222h2v54h-2zM214 399h2v53h-2zM217 221h2v55h-2zM217 399h2v53h-2zM220 221h2v55h-2zM220 399h2v53h-2zM223 221h2v55h-2zM223 399h2v53h-2zM226 221h2v55h-2zM226 399h2v53h-2zM229 221h2v55h-2zM229 399h2v53h-2zM232 221h2v55h-2zM232 399h2v54h-2zM235 220h2v56h-2zM235 399h2v54h-2zM238 220h2v56h-2zM238 399h2v54h-2zM241 220h2v55h-2zM241 398h2v55h-2zM244 220h2v55h-2zM244 398h2v55h-2zM247 220h2v55h-2zM247 398h2v55h-2zM250 220h2v55h-2zM250 398h2v55h-2zM253 219h2v56h-2zM253 398h2v55h-2zM256 219h2v56h-2zM256 398h2v55h-2zM259 219h2v56h-2zM259 398h2v55h-2zM262 219h2v56h-2zM262 398h2v55h-2zM265 219h2v56h-2zM265 398h2v55h-2zM268 218h2v56h-2zM268 398h2v55h-2zM271 218h2v56h-2zM271 398h2v55h-2zM274 218h2v56h-2zM274 398h2v55h-2zM277 218h2v56h-2zM277 398h2v55h-2zM280 218h2v56h-2zM280 398h2v54h-2zM283 218h2v56h-2zM283 397h2v55h-2zM286 217h2v57h-2zM286 397h2v55h-2zM289 217h2v57h-2zM289 397h2v55h-2zM292 217h2v56h-2zM292 397h2v55h-2zM295 217h2v56h-2zM295 397h2v55h-2zM298 217h2v56h-2zM298 397h2v55h-2zM301 216h2v57h-2zM301 397h2v55h-2zM304 216h2v57h-2zM304 397h2v55h-2zM307 216h2v57h-2zM307 396h2v56h-2zM310 216h2v57h-2zM310 396h2v56h-2zM313 216h2v56h-2zM313 396h2v56h-2zM316 216h2v56h-2zM316 396h2v55h-2zM319 215h2v57h-2zM319 396h2v55h-2zM322 215h2v57h-2zM322 396h2v55h-2zM325 215h2v57h-2zM325 396h2v55h-2zM328 215h2v57h-2zM328 395h2v56h-2zM331 215h2v56h-2zM331 395h2v56h-2zM334 215h2v56h-2zM334 395h2v56h-2zM337 215h2v56h-2zM337 395h2v55h-2zM340 214h2v57h-2zM340 395h2v55h-2zM343 214h2v57h-2zM343 395h2v55h-2zM346 214h2v57h-2zM346 395h2v55h-2zM349 214h2v57h-2zM349 394h2v56h-2zM352 214h2v56h-2zM352 394h2v56h-2zM355 214h2v56h-2zM355 394h2v56h-2zM358 214h2v56h-2zM358 394h2v55h-2zM361 213h2v57h-2zM361 394h2v55h-2zM364 213h2v57h-2zM364 394h2v55h-2zM367 213h2v57h-2zM367 394h2v55h-2zM370 213h2v57h-2zM370 393h2v56h-2zM373 213h2v56h-2zM373 393h2v55h-2zM376 213h2v56h-2zM376 393h2v55h-2zM379 213h2v56h-2zM379 393h2v55h-2zM382 213h2v56h-2zM382 393h2v55h-2zM385 213h2v56h-2zM385 393h2v55h-2zM388 213h2v56h-2zM388 393h2v55h-2zM391 213h2v56h-2zM391 392h2v55h-2zM394 213h2v56h-2zM394 392h2v55h-2zM397 213h2v56h-2zM397 392h2v55h-2zM400 212h2v56h-2zM400 392h2v55h-2zM403 212h2v56h-2zM403 392h2v55h-2zM406 212h2v56h-2zM406 392h2v54h-2zM409 212h2v56h-2zM409 392h2v54h-2zM412 212h2v56h-2zM412 391h2v55h-2zM415 212h2v56h-2zM415 391h2v55h-2zM418 212h2v56h-2zM418 391h2v55h-2zM421 212h2v56h-2zM421 391h2v54h-2zM424 212h2v56h-2zM424 391h2v54h-2zM427 212h2v56h-2zM427 391h2v54h-2zM430 212h2v56h-2zM430 391h2v54h-2zM433 212h2v56h-2zM433 391h2v54h-2zM436 212h2v56h-2zM436 390h2v55h-2zM439 213h2v55h-2zM439 390h2v54h-2zM442 213h2v55h-2zM442 390h2v54h-2zM445 213h2v55h-2zM445 390h2v54h-2zM448 213h2v55h-2zM448 390h2v54h-2zM451 213h2v55h-2zM451 390h2v54h-2zM454 213h2v55h-2zM454 390h2v53h-2zM457 213h2v55h-2zM457 390h2v53h-2zM460 213h2v55h-2zM460 390h2v53h-2zM463 213h2v55h-2zM463 390h2v53h-2zM466 213h2v55h-2zM466 389h2v54h-2zM469 213h2v55h-2zM469 389h2v54h-2zM472 213h2v55h-2zM472 389h2v54h-2zM475 213h2v55h-2zM475 389h2v53h-2zM478 214h2v54h-2zM478 389h2v53h-2zM481 214h2v54h-2zM481 389h2v53h-2zM484 214h2v54h-2zM484 389h2v53h-2zM487 214h2v54h-2zM487 389h2v53h-2zM490 214h2v54h-2zM490 389h2v53h-2zM493 214h2v54h-2zM493 389h2v52h-2zM496 214h2v54h-2zM496 389h2v52h-2zM499 215h2v53h-2zM499 389h2v52h-2zM502 215h2v53h-2zM502 388h2v53h-2zM505 215h2v54h-2zM505 388h2v53h-2zM508 215h2v54h-2zM508 388h2v53h-2zM511 215h2v54h-2zM511 388h2v53h-2zM514 215h2v54h-2zM514 388h2v53h-2zM517 216h2v53h-2zM517 388h2v52h-2zM520 216h2v53h-2zM520 388h2v52h-2zM523 216h2v53h-2zM523 388h2v52h-2zM526 216h2v54h-2zM526 388h2v52h-2zM529 216h2v54h-2zM529 388h2v52h-2zM532 216h2v54h-2zM532 388h2v52h-2zM535 217h2v53h-2zM535 388h2v52h-2zM538 217h2v53h-2zM538 387h2v53h-2zM541 217h2v53h-2zM541 387h2v53h-2zM544 217h2v54h-2zM544 387h2v53h-2zM547 217h2v54h-2zM547 387h2v52h-2zM550 218h2v53h-2zM550 387h2v52h-2zM553 218h2v53h-2zM553 387h2v52h-2zM556 218h2v54h-2zM556 387h2v52h-2zM559 218h2v54h-2zM559 387h2v52h-2zM562 219h2v53h-2zM562 387h2v52h-2zM565 219h2v53h-2zM565 387h2v52h-2zM568 219h2v53h-2zM568 387h2v52h-2zM571 219h2v54h-2zM571 386h2v53h-2zM574 219h2v54h-2zM574 386h2v53h-2zM577 220h2v53h-2zM577 386h2v53h-2zM580 220h2v54h-2zM580 386h2v53h-2zM583 220h2v54h-2zM583 386h2v53h-2zM586 220h2v54h-2zM586 386h2v52h-2zM589 221h2v53h-2zM589 386h2v52h-2zM592 221h2v54h-2zM592 386h2v52h-2zM595 221h2v54h-2zM595 386h2v52h-2zM598 221h2v54h-2zM598 386h2v52h-2zM601 222h2v54h-2zM601 385h2v53h-2zM604 222h2v54h-2zM604 385h2v53h-2zM607 222h2v54h-2zM607 385h2v53h-2zM610 222h2v54h-2zM610 385h2v53h-2zM613 223h2v54h-2zM613 385h2v53h-2zM616 223h2v54h-2zM616 385h2v53h-2zM619 223h2v54h-2zM619 385h2v53h-2zM622 223h2v55h-2zM622 384h2v54h-2zM625 224h2v54h-2zM625 384h2v54h-2zM628 224h2v54h-2zM628 384h2v54h-2zM631 224h2v55h-2zM631 384h2v54h-2zM634 224h2v55h-2zM634 384h2v53h-2zM637 225h2v54h-2zM637 384h2v53h-2zM640 225h2v55h-2zM640 383h2v54h-2zM643 225h2v55h-2zM643 383h2v54h-2zM646 225h2v55h-2zM646 383h2v54h-2zM649 225h2v56h-2zM649 383h2v54h-2zM652 226h2v55h-2zM652 383h2v54h-2zM655 226h2v56h-2zM655 383h2v54h-2zM658 226h2v56h-2zM658 382h2v55h-2zM661 226h2v56h-2zM661 382h2v55h-2zM664 227h2v56h-2zM664 382h2v55h-2zM667 227h2v56h-2zM667 382h2v55h-2zM670 227h2v56h-2zM670 382h2v55h-2zM673 227h2v57h-2zM673 381h2v56h-2zM676 227h2v57h-2zM676 381h2v56h-2zM679 228h2v57h-2zM679 381h2v56h-2zM682 228h2v57h-2zM682 381h2v55h-2zM685 228h2v57h-2zM685 380h2v56h-2zM688 228h2v58h-2zM688 380h2v56h-2zM691 229h2v57h-2zM691 380h2v56h-2zM694 229h2v57h-2zM694 380h2v56h-2zM697 229h2v58h-2zM697 379h2v57h-2zM700 229h2v58h-2zM700 379h2v57h-2zM703 229h2v59h-2zM703 379h2v57h-2zM706 229h2v59h-2zM706 379h2v57h-2zM709 230h2v58h-2zM709 378h2v58h-2zM712 230h2v59h-2zM712 378h2v58h-2zM715 230h2v59h-2zM715 378h2v58h-2zM718 230h2v59h-2zM718 377h2v59h-2zM721 230h2v60h-2zM721 377h2v58h-2z"/>
<path fill="#FF8040" d="M43 281h2v14h-2zM43 374h2v13h-2zM46 281h2v13h-2zM46 374h2v14h-2zM49 281h2v13h-2zM49 375h2v13h-2zM52 281h2v13h-2zM52 375h2v13h-2zM55 280h2v14h-2zM55 376h2v13h-2zM58 280h2v14h-2zM58 376h2v13h-2zM61 280h2v13h-2zM61 376h2v13h-2zM64 280h2v13h-2zM64 377h2v13h-2zM67 280h2v13h-2zM67 377h2v13h-2zM70 280h2v13h-2zM70 377h2v13h-2zM73 280h2v13h-2zM73 378h2v13h-2zM76 280h2v13h-2zM76 378h2v13h-2zM79 280h2v13h-2zM79 379h2v12h-2zM82 279h2v13h-2zM82 379h2v12h-2zM85 279h2v13h-2zM85 379h2v13h-2zM88 279h2v13h-2zM88 380h2v12h-2zM91 279h2v13h-2zM91 380h2v12h-2zM94 279h2v13h-2zM94 380h2v13h-2zM97 279h2v13h-2zM97 380h2v13h-2zM100 279h2v13h-2zM100 381h2v12h-2zM103 279h2v13h-2zM103 381h2v12h-2zM106 279h2v13h-2zM106 381h2v13h-2zM109 279h2v12h-2zM109 382h2v12h-2zM112 279h2v12h-2zM112 382h2v12h-2zM115 279h2v12h-2zM115 382h2v12h-2zM118 279h2v12h-2zM118 382h2v13h-2zM121 278h2v13h-2zM121 383h2v12h-2zM124 278h2v13h-2zM124 383h2v12h-2zM127 278h2v13h-2zM127 383h2v12h-2zM130 278h2v13h-2zM130 383h2v12h-2zM133 278h2v13h-2zM133 383h2v13h-2zM136 278h2v13h-2zM136 384h2v12h-2zM139 278h2v13h-2zM139 384h2v12h-2zM142 278h2v13h-2zM142 384h2v12h-2zM145 278h2v13h-2zM145 384h2v12h-2zM148 278h2v12h-2zM148 384h2v13h-2zM151 278h2v12h-2zM151 385h2v12h-2zM154 278h2v12h-2zM154 385h2v12h-2zM157 278h2v12h-2zM157 385h2v12h-2zM160 278h2v12h-2zM160 385h2v12h-2zM163 278h2v12h-2zM163 385h2v12h-2zM166 278h2v12h-2zM166 385h2v12h-2zM169 277h2v13h-2zM169 385h2v13h-2zM172 277h2v13h-2zM172 386h2v12h-2zM175 277h2v13h-2zM175 386h2v12h-2zM178 277h2v13h-2zM178 386h2v12h-2zM181 277h2v13h-2zM181 386h2v12h-2zM184 277h2v13h-2zM184 386h2v12h-2zM187 277h2v13h-2zM187 386h2v12h-2zM190 277h2v12h-2zM190 386h2v12h-2zM193 277h2v12h-2zM193 386h2v12h-2zM196 277h2v12h-2zM196 386h2v12h-2zM199 277h2v12h-2zM199 386h2v12h-2zM202 277h2v12h-2zM202 386h2v12h-2zM205 277h2v12h-2zM205 386h2v13h-2zM208 277h2v12h-2zM208 386h2v13h-2zM211 276h2v13h-2zM211 386h2v13h-2zM214 276h2v13h-2zM214 386h2v13h-2zM217 276h2v13h-2zM217 386h2v13h-2zM220 276h2v13h-2zM220 386h2v13h-2zM223 276h2v13h-2zM223 386h2v13h-2zM226 276h2v13h-2zM226 386h2v13h-2zM229 276h2v13h-2zM229 386h2v13h-2zM232 276h2v12h-2zM232 386h2v13h-2zM235 276h2v12h-2zM235 386h2v13h-2zM238 276h2v12h-2zM238 386h2v13h-2zM241 275h2v13h-2zM241 386h2v12h-2zM244 275h2v13h-2zM244 386h2v12h-2zM247 275h2v13h-2zM247 386h2v12h-2zM250 275h2v13h-2zM250 386h2v12h-2zM253 275h2v13h-2zM253 386h2v12h-2zM256 275h2v13h-2zM256 386h2v12h-2zM259 275h2v13h-2zM259 386h2v12h-2zM262 275h2v12h-2zM262 386h2v12h-2zM265 275h2v12h-2zM265 386h2v12h-2zM268 274h2v13h-2zM268 386h2v12h-2zM271 274h2v13h-2zM271 385h2v13h-2zM274 274h2v13h-2zM274 385h2v13h-2zM277 274h2v13h-2zM277 385h2v13h-2zM280 274h2v13h-2zM280 385h2v13h-2zM283 274h2v13h-2zM283 385h2v12h-2zM286 274h2v13h-2zM286 385h2v12h-2zM289 274h2v12h-2zM289 385h2v12h-2zM292 273h2v13h-2zM292 385h2v12h-2zM295 273h2v13h-2zM295 385h2v12h-2zM298 273h2v13h-2zM298 384h2v13h-2zM301 273h2v13h-2zM301 384h2v13h-2zM304 273h2v13h-2zM304 384h2v13h-2zM307 273h2v13h-2zM307 384h2v12h-2zM310 273h2v12h-2zM310 384h2v12h-2zM313 272h2v13h-2zM313 384h2v12h-2zM316 272h2v13h-2zM316 384h2v12h-2zM319 272h2v13h-2zM319 383h2v13h-2zM322 272h2v13h-2zM322 383h2v13h-2zM325 272h2v13h-2zM325 383h2v13h-2zM328 272h2v13h-2zM328 383h2v12h-2zM331 271h2v13h-2zM331 383h2v12h-2zM334 271h2v13h-2zM334 383h2v12h-2zM337 271h2v13h-2zM337 383h2v12h-2zM340 271h2v13h-2zM340 382h2v13h-2zM343 271h2v13h-2zM343 382h2v13h-2zM346 271h2v13h-2zM346 382h2v13h-2zM349 271h2v13h-2zM349 382h2v12h-2zM352 270h2v13h-2zM352 382h2v12h-2zM355 270h2v13h-2zM355 382h2v12h-2zM358 270h2v13h-2zM358 381h2v13h-2zM361 270h2v13h-2zM361 381h2v13h-2zM364 270h2v13h-2zM364 381h2v13h-2zM367 270h2v13h-2zM367 381h2v13h-2zM370 270h2v12h-2zM370 381h2v12h-2zM373 269h2v13h-2zM373 381h2v12h-2zM376 269h2v13h-2zM376 381h2v12h-2zM379 269h2v13h-2zM379 380h2v13h-2zM382 269h2v13h-2zM382 380h2v13h-2zM385 269h2v13h-2zM385 380h2v13h-2zM388 269h2v13h-2zM388 380h2v13h-2zM391 269h2v13h-2zM391 380h2v12h-2zM394 269h2v12h-2zM394 380h2v12h-2zM397 269h2v12h-2zM397 380h2v12h-2zM400 268h2v13h-2zM400 380h2v12h-2zM403 268h2v13h-2zM403 379h2v13h-2zM406 268h2v13h-2zM406 379h2v13h-2zM409 268h2v13h-2zM409 379h2v13h-2zM412 268h2v13h-2zM412 379h2v12h-2zM415 268h2v13h-2zM415 379h2v12h-2zM418 268h2v13h-2zM418 379h2v12h-2zM421 268h2v13h-2zM421 379h2v12h-2zM424 268h2v13h-2zM424 379h2v12h-2zM427 268h2v12h-2zM427 379h2v12h-2zM430 268h2v12h-2zM430 378h2v13h-2zM433 268h2v12h-2zM433 378h2v13h-2zM436 268h2v12h-2zM436 378h2v12h-2zM439 268h2v12h-2zM439 378h2v12h-2zM442 268h2v12h-2zM442 378h2v12h-2zM445 268h2v12h-2zM445 378h2v12h-2zM448 268h2v12h-2zM448 378h2v12h-2zM451 268h2v12h-2zM451 378h2v12h-2zM454 268h2v12h-2zM454 378h2v12h-2zM457 268h2v12h-2zM457 378h2v12h-2zM460 268h2v12h-2zM460 377h2v13h-2zM463 268h2v12h-2zM463 377h2v13h-2zM466 268h2v12h-2zM466 377h2v12h-2zM469 268h2v12h-2zM469 377h2v12h-2zM472 268h2v12h-2zM472 377h2v12h-2zM475 268h2v12h-2zM475 377h2v12h-2zM478 268h2v12h-2zM478 377h2v12h-2zM481 268h2v12h-2zM481 377h2v12h-2zM484 268h2v12h-2zM484 377h2v12h-2zM487 268h2v13h-2zM487 377h2v12h-2zM490 268h2v13h-2zM490 377h2v12h-2zM493 268h2v13h-2zM493 377h2v12h-2zM496 268h2v13h-2zM496 377h2v12h-2zM499 268h2v13h-2zM499 376h2v13h-2zM502 268h2v13h-2zM502 376h2v12h-2zM505 269h2v12h-2zM505 376h2v12h-2zM508 269h2v12h-2zM508 376h2v12h-2zM511 269h2v12h-2zM511 376h2v12h-2zM514 269h2v12h-2zM514 376h2v12h-2zM517 269h2v13h-2zM517 376h2v12h-2zM520 269h2v13h-2zM520 376h2v12h-2zM523 269h2v13h-2zM523 376h2v12h-2zM526 270h2v12h-2zM526 376h2v12h-2zM529 270h2v12h-2zM529 376h2v12h-2zM532 270h2v12h-2zM532 375h2v13h-2zM535 270h2v13h-2zM535 375h2v13h-2zM538 270h2v13h-2zM538 375h2v12h-2zM541 270h2v13h-2zM541 375h2v12h-2zM544 271h2v12h-2zM544 375h2v12h-2zM547 271h2v12h-2zM547 375h2v12h-2zM550 271h2v13h-2zM550 375h2v12h-2zM553 271h2v13h-2zM553 375h2v12h-2zM556 272h2v12h-2zM556 375h2v12h-2zM559 272h2v12h-2zM559 375h2v12h-2zM562 272h2v13h-2zM562 374h2v13h-2zM565 272h2v13h-2zM565 374h2v13h-2zM568 272h2v13h-2zM568 374h2v13h-2zM571 273h2v13h-2zM571 374h2v12h-2zM574 273h2v13h-2zM574 374h2v12h-2zM577 273h2v13h-2zM577 374h2v12h-2zM580 274h2v12h-2zM580 374h2v12h-2zM583 274h2v13h-2zM583 374h2v12h-2zM586 274h2v13h-2zM586 373h2v13h-2zM589 274h2v13h-2zM589 373h2v13h-2zM592 275h2v13h-2zM592 373h2v13h-2zM595 275h2v13h-2zM595 373h2v13h-2zM598 275h2v13h-2zM598 373h2v13h-2zM601 276h2v13h-2zM601 373h2v12h-2zM604 276h2v13h-2zM604 372h2v13h-2zM607 276h2v13h-2zM607 372h2v13h-2zM610 276h2v14h-2zM610 372h2v13h-2zM613 277h2v13h-2zM613 372h2v13h-2zM616 277h2v14h-2zM616 372h2v13h-2zM619 277h2v14h-2zM619 371h2v14h-2zM622 278h2v13h-2zM622 371h2v13h-2zM625 278h2v14h-2zM625 371h2v13h-2zM628 278h2v14h-2zM628 371h2v13h-2zM631 279h2v14h-2zM631 371h2v13h-2zM634 279h2v14h-2zM634 370h2v14h-2zM637 279h2v14h-2zM637 370h2v14h-2zM640 280h2v14h-2zM640 370h2v13h-2zM643 280h2v14h-2zM643 370h2v13h-2zM646 280h2v15h-2zM646 369h2v14h-2zM649 281h2v14h-2zM649 369h2v14h-2zM652 281h2v15h-2zM652 369h2v14h-2zM655 282h2v14h-2zM655 368h2v15h-2zM658 282h2v15h-2zM658 368h2v14h-2zM661 282h2v15h-2zM661 368h2v14h-2zM664 283h2v14h-2zM664 368h2v14h-2zM667 283h2v15h-2zM667 367h2v15h-2zM670 283h2v15h-2zM670 367h2v15h-2zM673 284h2v15h-2zM673 367h2v14h-2zM676 284h2v15h-2zM676 366h2v15h-2zM679 285h2v15h-2zM679 366h2v15h-2zM682 285h2v15h-2zM682 366h2v15h-2zM685 285h2v16h-2zM685 365h2v15h-2zM688 286h2v15h-2zM688 365h2v15h-2zM691 286h2v16h-2zM691 364h2v16h-2zM694 286h2v17h-2zM694 364h2v16h-2zM697 287h2v16h-2zM697 364h2v15h-2zM700 287h2v17h-2zM700 363h2v16h-2zM703 288h2v16h-2zM703 363h2v16h-2zM706 288h2v17h-2zM706 362h2v17h-2zM709 288h2v17h-2zM709 362h2v16h-2zM712 289h2v17h-2zM712 361h2v17h-2zM715 289h2v17h-2zM715 361h2v17h-2zM718 289h2v18h-2zM718 360h2v17h-2zM721 290h2v18h-2zM721 360h2v17h-2z"/>
<path fill="#000000" d="M43 203h2v1h-2zM43 204h3v1h-3zM43 224h2v1h-2zM43 225h3v1h-3zM43 462h2v1h-2zM43 463h3v1h-3zM43 441h2v1h-2zM43 442h3v1h-3zM46 203h2v1h-2zM46 204h3v1h-3zM46 224h2v1h-2zM46 225h3v1h-3zM46 462h2v1h-2zM46 463h3v1h-3zM46 441h2v1h-2zM46 442h3v1h-3zM49 203h2v1h-2zM49 204h3v1h-3zM49 224h2v1h-2zM49 225h3v1h-3zM49 463h2v1h-2zM49 464h3v1h-3zM49 441h2v1h-2zM49 442h3v1h-3zM52 203h2v1h-2zM52 204h3v1h-3zM52 224h2v1h-2zM52 225h3v1h-3zM52 463h2v1h-2zM52 464h3v1h-3zM52 441h2v1h-2zM52 442h3v1h-3zM55 203h2v1h-2zM55 204h3v1h-3zM55 224h2v1h-2zM55 225h3v1h-3zM55 463h2v1h-2zM55 464h3v1h-3zM55 442h2v1h-2zM55 443h3v1h-3zM58 203h2v1h-2zM58 204h3v1h-3zM58 224h2v1h-2zM58 225h3v1h-3zM58 463h2v1h-2zM58 464h3v1h-3zM58 442h2v1h-2zM58 443h3v1h-3zM61 202h2v1h-2zM61 203h3v1h-3zM61 224h2v1h-2zM61 225h3v1h-3zM61 464h2v1h-2zM61 465h3v1h-3zM61 442h2v1h-2zM61 443h3v1h-3zM64 202h2v1h-2zM64 203h3v1h-3zM64 224h2v1h-2zM64 225h3v1h-3zM64 464h2v1h-2zM64 465h3v1h-3zM64 442h2v1h-2zM64 443h3v1h-3zM67 202h2v1h-2zM67 203h3v1h-3zM67 224h2v1h-2zM67 225h3v1h-3zM67 464h2v1h-2zM67 465h3v1h-3zM67 443h2v1h-2zM67 444h3v1h-3zM70 202h2v1h-2zM70 203h3v1h-3zM70 224h2v1h-2zM70 225h3v1h-3zM70 465h2v1h-2zM70 466h3v1h-3zM70 443h2v1h-2zM70 444h3v1h-3zM73 202h2v1h-2zM73 203h3v1h-3zM73 224h2v1h-2zM73 225h3v1h-3zM73 465h2v1h-2zM73 466h3v1h-3zM73 443h2v1h-2zM73 444h3v1h-3zM76 202h2v1h-2zM76 203h3v1h-3zM76 224h2v1h-2zM76 225h3v1h-3zM76 465h2v1h-2zM76 466h3v1h-3zM76 443h2v1h-2zM76 444h3v1h-3zM79 202h2v1h-2zM79 203h3v1h-3zM79 224h2v1h-2zM79 225h3v1h-3zM79 465h2v1h-2zM79 466h3v1h-3zM79 444h2v1h-2zM79 445h3v1h-3zM82 202h2v1h-2zM82 203h3v1h-3zM82 224h2v1h-2zM82 225h3v1h-3zM82 466h2v1h-2zM82 467h3v1h-3zM82 444h2v1h-2zM82 445h3v1h-3zM85 202h2v1h-2zM85 203h3v1h-3zM85 224h2v1h-2zM85 225h3v1h-3zM85 466h2v1h-2zM85 467h3v1h-3zM85 444h2v1h-2zM85 445h3v1h-3zM88 202h2v1h-2zM88 203h3v1h-3zM88 224h2v1h-2zM88 225h3v1h-3zM88 466h2v1h-2zM88 467h3v1h-3zM88 444h2v1h-2zM88 445h3v1h-3zM91 202h2v1h-2zM91 203h3v1h-3zM91 224h2v1h-2zM91 225h3v1h-3zM91 466h2v1h-2zM91 467h3v1h-3zM91 445h2v1h-2zM91 446h3v1h-3zM94 202h2v1h-2zM94 203h3v1h-3zM94 224h2v1h-2zM94 225h3v1h-3zM94 467h2v1h-2zM94 468h3v1h-3zM94 445h2v1h-2zM94 446h3v1h-3zM97 202h2v1h-2zM97 203h3v1h-3zM97 224h2v1h-2zM97 225h3v1h-3zM97 467h2v1h-2zM97 468h3v1h-3zM97 445h2v1h-2zM97 446h3v1h-3zM100 202h2v1h-2zM100 203h3v1h-3zM100 224h2v1h-2zM100 225h3v1h-3zM100 467h2v1h-2zM100 468h3v1h-3zM100 445h2v1h-2zM100 446h3v1h-3zM103 202h2v1h-2zM103 203h3v1h-3zM103 223h2v1h-2zM103 224h3v1h-3zM103 467h2v1h-2zM103 468h3v1h-3zM103 446h2v1h-2zM103 447h3v1h-3zM106 201h2v1h-2zM106 202h3v1h-3zM106 223h2v1h-2zM106 224h3v1h-3zM106 468h2v1h-2zM106 469h3v1h-3zM106 446h2v1h-2zM106 447h3v1h-3zM109 201h2v1h-2zM109 202h3v1h-3zM109 223h2v1h-2zM109 224h3v1h-3zM109 468h2v1h-2zM109 469h3v1h-3zM109 446h2v1h-2zM109 447h3v1h-3zM112 201h2v1h-2zM112 202h3v1h-3zM112 223h2v1h-2zM112 224h3v1h-3zM112 468h2v1h-2zM112 469h3v1h-3zM112 446h2v1h-2zM112 447h3v1h-3zM115 201h2v1h-2zM115 202h3v1h-3zM115 223h2v1h-2zM115 224h3v1h-3zM115 469h2v1h-2zM115 470h3v1h-3zM115 447h2v1h-2zM115 448h3v1h-3zM118 201h2v1h-2zM118 202h3v1h-3zM118 223h2v1h-2zM118 224h3v1h-3zM118 469h2v1h-2zM118 470h3v1h-3zM118 447h2v1h-2zM118 448h3v1h-3zM121 201h2v1h-2zM121 202h3v1h-3zM121 223h2v1h-2zM121 224h3v1h-3zM121 469h2v1h-2zM121 470h3v1h-3zM121 447h2v1h-2zM121 448h3v1h-3zM124 201h2v1h-2zM124 202h3v1h-3zM124 223h2v1h-2zM124 224h3v1h-3zM124 469h2v1h-2zM124 470h3v1h-3zM124 447h2v1h-2zM124 448h3v1h-3zM127 201h2v1h-2zM127 202h3v1h-3zM127 223h2v1h-2zM127 224h3v1h-3zM127 470h2v1h-2zM127 471h3v1h-3zM127 447h2v1h-2zM127 448h3v1h-3zM130 201h2v1h-2zM130 202h3v1h-3zM130 223h2v1h-2zM130 224h3v1h-3zM130 470h2v1h-2zM130 471h3v1h-3zM130 448h2v1h-2zM130 449h3v1h-3zM133 201h2v1h-2zM133 202h3v1h-3zM133 223h2v1h-2zM133 224h3v1h-3zM133 470h2v1h-2zM133 471h3v1h-3zM133 448h2v1h-2zM133 449h3v1h-3zM136 200h2v1h-2zM136 201h3v1h-3zM136 223h2v1h-2zM136 224h3v1h-3zM136 470h2v1h-2zM136 471h3v1h-3zM136 448h2v1h-2zM136 449h3v1h-3zM139 200h2v1h-2zM139 201h3v1h-3zM139 223h2v1h-2zM139 224h3v1h-3zM139 471h2v1h-2zM139 472h3v1h-3zM139 448h2v1h-2zM139 449h3v1h-3zM142 200h2v1h-2zM142 201h3v1h-3zM142 222h2v1h-2zM142 223h3v1h-3zM142 471h2v1h-2zM142 472h3v1h-3zM142 449h2v1h-2zM142 450h3v1h-3zM145 200h2v1h-2zM145 201h3v1h-3zM145 222h2v1h-2zM145 223h3v1h-3zM145 471h2v1h-2zM145 472h3v1h-3zM145 449h2v1h-2zM145 450h3v1h-3zM148 200h2v1h-2zM148 201h3v1h-3zM148 222h2v1h-2zM148 223h3v1h-3zM148 471h2v1h-2zM148 472h3v1h-3zM148 449h2v1h-2zM148 450h3v1h-3zM151 200h2v1h-2zM151 201h3v1h-3zM151 222h2v1h-2zM151 223h3v1h-3zM151 471h2v1h-2zM151 472h3v1h-3zM151 449h2v1h-2zM151 450h3v1h-3zM154 200h2v1h-2zM154 201h3v1h-3zM154 222h2v1h-2zM154 223h3v1h-3zM154 472h2v1h-2zM154 473h3v1h-3zM154 449h2v1h-2zM154 450h3v1h-3zM157 200h2v1h-2zM157 201h3v1h-3zM157 222h2v1h-2zM157 223h3v1h-3zM157 472h2v1h-2zM157 473h3v1h-3zM157 449h2v1h-2zM157 450h3v1h-3zM160 199h2v1h-2zM160 200h3v1h-3zM160 222h2v1h-2zM160 223h3v1h-3zM160 472h2v1h-2zM160 473h3v1h-3zM160 450h2v1h-2zM160 451h3v1h-3zM163 199h2v1h-2zM163 200h3v1h-3zM163 222h2v1h-2zM163 223h3v1h-3zM163 472h2v1h-2zM163 473h3v1h-3zM163 450h2v1h-2zM163 451h3v1h-3zM166 199h2v1h-2zM166 200h3v1h-3zM166 222h2v1h-2zM166 223h3v1h-3zM166 473h2v1h-2zM166 474h3v1h-3zM166 450h2v1h-2zM166 451h3v1h-3zM169 199h2v1h-2zM169 200h3v1h-3zM169 222h2v1h-2zM169 223h3v1h-3zM169 473h2v1h-2zM169 474h3v1h-3zM169 450h2v1h-2zM169 451h3v1h-3zM172 199h2v1h-2zM172 200h3v1h-3zM172 221h2v1h-2zM172 222h3v1h-3zM172 473h2v1h-2zM172 474h3v1h-3zM172 450h2v1h-2zM172 451h3v1h-3zM175 199h2v1h-2zM175 200h3v1h-3zM175 221h2v1h-2zM175 222h3v1h-3zM175 473h2v1h-2zM175 474h3v1h-3zM175 451h2v1h-2zM175 452h3v1h-3zM178 198h2v1h-2zM178 199h3v1h-3zM178 221h2v1h-2zM178 222h3v1h-3zM178 473h2v1h-2zM178 474h3v1h-3zM178 451h2v1h-2zM178 452h3v1h-3zM181 198h2v1h-2zM181 199h3v1h-3zM181 221h2v1h-2zM181 222h3v1h-3zM181 474h2v1h-2zM181 475h3v1h-3zM181 451h2v1h-2zM181 452h3v1h-3zM184 198h2v1h-2zM184 199h3v1h-3zM184 221h2v1h-2zM184 222h3v1h-3zM184 474h2v1h-2zM184 475h3v1h-3zM184 451h2v1h-2zM184 452h3v1h-3zM187 198h2v1h-2zM187 199h3v1h-3zM187 221h2v1h-2zM187 222h3v1h-3zM187 474h2v1h-2zM187 475h3v1h-3zM187 451h2v1h-2zM187 452h3v1h-3zM190 198h2v1h-2zM190 199h3v1h-3zM190 221h2v1h-2zM190 222h3v1h-3zM190 474h2v1h-2zM190 475h3v1h-3zM190 451h2v1h-2zM190 452h3v1h-3zM193 198h2v1h-2zM193 199h3v1h-3zM193 221h2v1h-2zM193 222h3v1h-3zM193 474h2v1h-2zM193 475h3v1h-3zM193 451h2v1h-2zM193 452h3v1h-3zM196 197h2v1h-2zM196 198h3v1h-3zM196 220h2v1h-2zM196 221h3v1h-3zM196 475h2v1h-2zM196 476h3v1h-3zM196 451h2v1h-2zM196 452h3v1h-3zM199 197h2v1h-2zM199 198h3v1h-3zM199 220h2v1h-2zM199 221h3v1h-3zM199 475h2v1h-2zM199 476h3v1h-3zM199 452h2v1h-2zM199 453h3v1h-3zM202 197h2v1h-2zM202 198h3v1h-3zM202 220h2v1h-2zM202 221h3v1h-3zM202 475h2v1h-2zM202 476h3v1h-3zM202 452h2v1h-2zM202 453h3v1h-3zM205 197h2v1h-2zM205 198h3v1h-3zM205 220h2v1h-2zM205 221h3v1h-3zM205 475h2v1h-2zM205 476h3v1h-3zM205 452h2v1h-2zM205 453h3v1h-3zM208 197h2v1h-2zM208 198h3v1h-3zM208 220h2v1h-2zM208 221h3v1h-3zM208 475h2v1h-2zM208 476h3v1h-3zM208 452h2v1h-2zM208 453h3v1h-3zM211 196h2v1h-2zM211 197h3v1h-3zM211 220h2v1h-2zM211 221h3v1h-3zM211 475h2v1h-2zM211 476h3v1h-3zM211 452h2v1h-2zM211 453h3v1h-3zM214 196h2v1h-2zM214 197h3v1h-3zM214 220h2v1h-2zM214 221h3v1h-3zM214 475h2v1h-2zM214 476h3v1h-3zM214 452h2v1h-2zM214 453h3v1h-3zM217 196h2v1h-2zM217 197h3v1h-3zM217 219h2v1h-2zM217 220h3v1h-3zM217 476h2v1h-2zM217 477h3v1h-3zM217 452h2v1h-2zM217 453h3v1h-3zM220 196h2v1h-2zM220 197h3v1h-3zM220 219h2v1h-2zM220 220h3v1h-3zM220 476h2v1h-2zM220 477h3v1h-3zM220 452h2v1h-2zM220 453h3v1h-3zM223 196h2v1h-2zM223 197h3v1h-3zM223 219h2v1h-2zM223 220h3v1h-3zM223 476h2v1h-2zM223 477h3v1h-3zM223 452h2v1h-2zM223 453h3v1h-3zM226 195h2v1h-2zM226 196h3v1h-3zM226 219h2v1h-2zM226 220h3v1h-3zM226 476h2v1h-2zM226 477h3v1h-3zM226 452h2v1h-2zM226 453h3v1h-3zM229 195h2v1h-2zM229 196h3v1h-3zM229 219h2v1h-2zM229 220h3v1h-3zM229 476h2v1h-2zM229 477h3v1h-3zM229 452h2v1h-2zM229 453h3v1h-3zM232 195h2v1h-2zM232 196h3v1h-3zM232 219h2v1h-2zM232 220h3v1h-3zM232 476h2v1h-2zM232 477h3v1h-3zM232 453h2v1h-2zM232 454h3v1h-3zM235 195h2v1h-2zM235 196h3v1h-3zM235 218h2v1h-2zM235 219h3v1h-3zM235 476h2v1h-2zM235 477h3v1h-3zM235 453h2v1h-2zM235 454h3v1h-3zM238 194h2v1h-2zM238 195h3v1h-3zM238 218h2v1h-2zM238 219h3v1h-3zM238 476h2v1h-2zM238 477h3v1h-3zM238 453h2v1h-2zM238 454h3v1h-3zM241 194h2v1h-2zM241 195h3v1h-3zM241 218h2v1h-2zM241 219h3v1h-3zM241 476h2v1h-2zM241 477h3v1h-3zM241 453h2v1h-2zM241 454h3v1h-3zM244 194h2v1h-2zM244 195h3v1h-3zM244 218h2v1h-2zM244 219h3v1h-3zM244 477h2v1h-2zM244 478h3v1h-3zM244 453h2v1h-2zM244 454h3v1h-3zM247 194h2v1h-2zM247 195h3v1h-3zM247 218h2v1h-2zM247 219h3v1h-3zM247 477h2v1h-2zM247 478h3v1h-3zM247 453h2v1h-2zM247 454h3v1h-3zM250 194h2v1h-2zM250 195h3v1h-3zM250 218h2v1h-2zM250 219h3v1h-3zM250 477h2v1h-2zM250 478h3v1h-3zM250 453h2v1h-2zM250 454h3v1h-3zM253 193h2v1h-2zM253 194h3v1h-3zM253 217h2v1h-2zM253 218h3v1h-3zM253 477h2v1h-2zM253 478h3v1h-3zM253 453h2v1h-2zM253 454h3v1h-3zM256 193h2v1h-2zM256 194h3v1h-3zM256 217h2v1h-2zM256 218h3v1h-3zM256 477h2v1h-2zM256 478h3v1h-3zM256 453h2v1h-2zM256 454h3v1h-3zM259 193h2v1h-2zM259 194h3v1h-3zM259 217h2v1h-2zM259 218h3v1h-3zM259 477h2v1h-2zM259 478h3v1h-3zM259 453h2v1h-2zM259 454h3v1h-3zM262 193h2v1h-2zM262 194h3v1h-3zM262 217h2v1h-2zM262 218h3v1h-3zM262 477h2v1h-2zM262 478h3v1h-3zM262 453h2v1h-2zM262 454h3v1h-3zM265 192h2v1h-2zM265 193h3v1h-3zM265 217h2v1h-2zM265 218h3v1h-3zM265 477h2v1h-2zM265 478h3v1h-3zM265 453h2v1h-2zM265 454h3v1h-3zM268 192h2v1h-2zM268 193h3v1h-3zM268 216h2v1h-2zM268 217h3v1h-3zM268 477h2v1h-2zM268 478h3v1h-3zM268 453h2v1h-2zM268 454h3v1h-3zM271 192h2v1h-2zM271 193h3v1h-3zM271 216h2v1h-2zM271 217h3v1h-3zM271 477h2v1h-2zM271 478h3v1h-3zM271 453h2v1h-2zM271 454h3v1h-3zM274 192h2v1h-2zM274 193h3v1h-3zM274 216h2v1h-2zM274 217h3v1h-3zM274 477h2v1h-2zM274 478h3v1h-3zM274 453h2v1h-2zM274 454h3v1h-3zM277 192h2v1h-2zM277 193h3v1h-3zM277 216h2v1h-2zM277 217h3v1h-3zM277 477h2v1h-2zM277 478h3v1h-3zM277 453h2v1h-2zM277 454h3v1h-3zM280 191h2v1h-2zM280 192h3v1h-3zM280 216h2v1h-2zM280 217h3v1h-3zM280 477h2v1h-2zM280 478h3v1h-3zM280 452h2v1h-2zM280 453h3v1h-3zM283 191h2v1h-2zM283 192h3v1h-3zM283 216h2v1h-2zM283 217h3v1h-3zM283 477h2v1h-2zM283 478h3v1h-3zM283 452h2v1h-2zM283 453h3v1h-3zM286 191h2v1h-2zM286 192h3v1h-3zM286 215h2v1h-2zM286 216h3v1h-3zM286 477h2v1h-2zM286 478h3v1h-3zM286 452h2v1h-2zM286 453h3v1h-3zM289 191h2v1h-2zM289 192h3v1h-3zM289 215h2v1h-2zM289 216h3v1h-3zM289 477h2v1h-2zM289 478h3v1h-3zM289 452h2v1h-2zM289 453h3v1h-3zM292 191h2v1h-2zM292 192h3v1h-3zM292 215h2v1h-2zM292 216h3v1h-3zM292 477h2v1h-2zM292 478h3v1h-3zM292 452h2v1h-2zM292 453h3v1h-3zM295 190h2v1h-2zM295 191h3v1h-3zM295 215h2v1h-2zM295 216h3v1h-3zM295 477h2v1h-2zM295 478h3v1h-3zM295 452h2v1h-2zM295 453h3v1h-3zM298 190h2v1h-2zM298 191h3v1h-3zM298 215h2v1h-2zM298 216h3v1h-3zM298 477h2v1h-2zM298 478h3v1h-3zM298 452h2v1h-2zM298 453h3v1h-3zM301 190h2v1h-2zM301 191h3v1h-3zM301 214h2v1h-2zM301 215h3v1h-3zM301 477h2v1h-2zM301 478h3v1h-3zM301 452h2v1h-2zM301 453h3v1h-3zM304 190h2v1h-2zM304 191h3v1h-3zM304 214h2v1h-2zM304 215h3v1h-3zM304 476h2v1h-2zM304 477h3v1h-3zM304 452h2v1h-2zM304 453h3v1h-3zM307 190h2v1h-2zM307 191h3v1h-3zM307 214h2v1h-2zM307 215h3v1h-3zM307 476h2v1h-2zM307 477h3v1h-3zM307 452h2v1h-2zM307 453h3v1h-3zM310 189h2v1h-2zM310 190h3v1h-3zM310 214h2v1h-2zM310 215h3v1h-3zM310 476h2v1h-2zM310 477h3v1h-3zM310 452h2v1h-2zM310 453h3v1h-3zM313 189h2v1h-2zM313 190h3v1h-3zM313 214h2v1h-2zM313 215h3v1h-3zM313 476h2v1h-2zM313 477h3v1h-3zM313 452h2v1h-2zM313 453h3v1h-3zM316 189h2v1h-2zM316 190h3v1h-3zM316 214h2v1h-2zM316 215h3v1h-3zM316 476h2v1h-2zM316 477h3v1h-3zM316 451h2v1h-2zM316 452h3v1h-3zM319 189h2v1h-2zM319 190h3v1h-3zM319 213h2v1h-2zM319 214h3v1h-3zM319 476h2v1h-2zM319 477h3v1h-3zM319 451h2v1h-2zM319 452h3v1h-3zM322 189h2v1h-2zM322 190h3v1h-3zM322 213h2v1h-2zM322 214h3v1h-3zM322 476h2v1h-2zM322 477h3v1h-3zM322 451h2v1h-2zM322 452h3v1h-3zM325 188h2v1h-2zM325 189h3v1h-3zM325 213h2v1h-2zM325 214h3v1h-3zM325 476h2v1h-2zM325 477h3v1h-3zM325 451h2v1h-2zM325 452h3v1h-3zM328 188h2v1h-2zM328 189h3v1h-3zM328 213h2v1h-2zM328 214h3v1h-3zM328 476h2v1h-2zM328 477h3v1h-3zM328 451h2v1h-2zM328 452h3v1h-3zM331 188h2v1h-2zM331 189h3v1h-3zM331 213h2v1h-2zM331 214h3v1h-3zM331 475h2v1h-2zM331 476h3v1h-3zM331 451h2v1h-2zM331 452h3v1h-3zM334 188h2v1h-2zM334 189h3v1h-3zM334 213h2v1h-2zM334 214h3v1h-3zM334 475h2v1h-2zM334 476h3v1h-3zM334 451h2v1h-2zM334 452h3v1h-3zM337 188h2v1h-2zM337 189h3v1h-3zM337 213h2v1h-2zM337 214h3v1h-3zM337 475h2v1h-2zM337 476h3v1h-3zM337 450h2v1h-2zM337 451h3v1h-3zM340 188h2v1h-2zM340 189h3v1h-3zM340 212h2v1h-2zM340 213h3v1h-3zM340 475h2v1h-2zM340 476h3v1h-3zM340 450h2v1h-2zM340 451h3v1h-3zM343 188h2v1h-2zM343 189h3v1h-3zM343 212h2v1h-2zM343 213h3v1h-3zM343 475h2v1h-2zM343 476h3v1h-3zM343 450h2v1h-2zM343 451h3v1h-3zM346 187h2v1h-2zM346 188h3v1h-3zM346 212h2v1h-2zM346 213h3v1h-3zM346 475h2v1h-2zM346 476h3v1h-3zM346 450h2v1h-2zM346 451h3v1h-3zM349 187h2v1h-2zM349 188h3v1h-3zM349 212h2v1h-2zM349 213h3v1h-3zM349 475h2v1h-2zM349 476h3v1h-3zM349 450h2v1h-2zM349 451h3v1h-3zM352 187h2v1h-2zM352 188h3v1h-3zM352 212h2v1h-2zM352 213h3v1h-3zM352 474h2v1h-2zM352 475h3v1h-3zM352 450h2v1h-2zM352 451h3v1h-3zM355 187h2v1h-2zM355 188h3v1h-3zM355 212h2v1h-2zM355 213h3v1h-3zM355 474h2v1h-2zM355 475h3v1h-3zM355 450h2v1h-2zM355 451h3v1h-3zM358 187h2v1h-2zM358 188h3v1h-3zM358 212h2v1h-2zM358 213h3v1h-3zM358 474h2v1h-2zM358 475h3v1h-3zM358 449h2v1h-2zM358 450h3v1h-3zM361 187h2v1h-2zM361 188h3v1h-3zM361 211h2v1h-2zM361 212h3v1h-3zM361 474h2v1h-2zM361 475h3v1h-3zM361 449h2v1h-2zM361 450h3v1h-3zM364 187h2v1h-2zM364 188h3v1h-3zM364 211h2v1h-2zM364 212h3v1h-3zM364 474h2v1h-2zM364 475h3v1h-3zM364 449h2v1h-2zM364 450h3v1h-3zM367 187h2v1h-2zM367 188h3v1h-3zM367 211h2v1h-2zM367 212h3v1h-3zM367 473h2v1h-2zM367 474h3v1h-3zM367 449h2v1h-2zM367 450h3v1h-3zM370 187h2v1h-2zM370 188h3v1h-3zM370 211h2v1h-2zM370 212h3v1h-3zM370 473h2v1h-2zM370 474h3v1h-3zM370 449h2v1h-2zM370 450h3v1h-3zM373 187h2v1h-2zM373 188h3v1h-3zM373 211h2v1h-2zM373 212h3v1h-3zM373 473h2v1h-2zM373 474h3v1h-3zM373 448h2v1h-2zM373 449h3v1h-3zM376 186h2v1h-2zM376 187h3v1h-3zM376 211h2v1h-2zM376 212h3v1h-3zM376 473h2v1h-2zM376 474h3v1h-3zM376 448h2v1h-2zM376 449h3v1h-3zM379 186h2v1h-2zM379 187h3v1h-3zM379 211h2v1h-2zM379 212h3v1h-3zM379 473h2v1h-2zM379 474h3v1h-3zM379 448h2v1h-2zM379 449h3v1h-3zM382 186h2v1h-2zM382 187h3v1h-3zM382 211h2v1h-2zM382 212h3v1h-3zM382 472h2v1h-2zM382 473h3v1h-3zM382 448h2v1h-2zM382 449h3v1h-3zM385 186h2v1h-2zM385 187h3v1h-3zM385 211h2v1h-2zM385 212h3v1h-3zM385 472h2v1h-2zM385 473h3v1h-3zM385 448h2v1h-2zM385 449h3v1h-3zM388 186h2v1h-2zM388 187h3v1h-3zM388 211h2v1h-2zM388 212h3v1h-3zM388 472h2v1h-2zM388 473h3v1h-3zM388 448h2v1h-2zM388 449h3v1h-3zM391 186h2v1h-2zM391 187h3v1h-3zM391 211h2v1h-2zM391 212h3v1h-3zM391 472h2v1h-2zM391 473h3v1h-3zM391 447h2v1h-2zM391 448h3v1h-3zM394 186h2v1h-2zM394 187h3v1h-3zM394 211h2v1h-2zM394 212h3v1h-3zM394 471h2v1h-2zM394 472h3v1h-3zM394 447h2v1h-2zM394 448h3v1h-3zM397 186h2v1h-2zM397 187h3v1h-3zM397 211h2v1h-2zM397 212h3v1h-3zM397 471h2v1h-2zM397 472h3v1h-3zM397 447h2v1h-2zM397 448h3v1h-3zM400 186h2v1h-2zM400 187h3v1h-3zM400 210h2v1h-2zM400 211h3v1h-3zM400 471h2v1h-2zM400 472h3v1h-3zM400 447h2v1h-2zM400 448h3v1h-3zM403 186h2v1h-2zM403 187h3v1h-3zM403 210h2v1h-2zM403 211h3v1h-3zM403 471h2v1h-2zM403 472h3v1h-3zM403 447h2v1h-2zM403 448h3v1h-3zM406 186h2v1h-2zM406 187h3v1h-3zM406 210h2v1h-2zM406 211h3v1h-3zM406 471h2v1h-2zM406 472h3v1h-3zM406 446h2v1h-2zM406 447h3v1h-3zM409 186h2v1h-2zM409 187h3v1h-3zM409 210h2v1h-2zM409 211h3v1h-3zM409 470h2v1h-2zM409 471h3v1h-3zM409 446h2v1h-2zM409 447h3v1h-3zM412 186h2v1h-2zM412 187h3v1h-3zM412 210h2v1h-2zM412 211h3v1h-3zM412 470h2v1h-2zM412 471h3v1h-3zM412 446h2v1h-2zM412 447h3v1h-3zM415 186h2v1h-2zM415 187h3v1h-3zM415 210h2v1h-2zM415 211h3v1h-3zM415 470h2v1h-2zM415 471h3v1h-3zM415 446h2v1h-2zM415 447h3v1h-3zM418 186h2v1h-2zM418 187h3v1h-3zM418 210h2v1h-2zM418 211h3v1h-3zM418 470h2v1h-2zM418 471h3v1h-3zM418 446h2v1h-2zM418 447h3v1h-3zM421 186h2v1h-2zM421 187h3v1h-3zM421 210h2v1h-2zM421 211h3v1h-3zM421 469h2v1h-2zM421 470h3v1h-3zM421 445h2v1h-2zM421 446h3v1h-3zM424 187h2v1h-2zM424 188h3v1h-3zM424 210h2v1h-2zM424 211h3v1h-3zM424 469h2v1h-2zM424 470h3v1h-3zM424 445h2v1h-2zM424 446h3v1h-3zM427 187h2v1h-2zM427 188h3v1h-3zM427 210h2v1h-2zM427 211h3v1h-3zM427 469h2v1h-2zM427 470h3v1h-3zM427 445h2v1h-2zM427 446h3v1h-3zM430 187h2v1h-2zM430 188h3v1h-3zM430 210h2v1h-2zM430 211h3v1h-3zM430 469h2v1h-2zM430 470h3v1h-3zM430 445h2v1h-2zM430 446h3v1h-3zM433 187h2v1h-2zM433 188h3v1h-3zM433 210h2v1h-2zM433 211h3v1h-3zM433 468h2v1h-2zM433 469h3v1h-3zM433 445h2v1h-2zM433 446h3v1h-3zM436 187h2v1h-2zM436 188h3v1h-3zM436 210h2v1h-2zM436 211h3v1h-3zM436 468h2v1h-2zM436 469h3v1h-3zM436 445h2v1h-2zM436 446h3v1h-3zM439 187h2v1h-2zM439 188h3v1h-3zM439 211h2v1h-2zM439 212h3v1h-3zM439 468h2v1h-2zM439 469h3v1h-3zM439 444h2v1h-2zM439 445h3v1h-3zM442 187h2v1h-2zM442 188h3v1h-3zM442 211h2v1h-2zM442 212h3v1h-3zM442 468h2v1h-2zM442 469h3v1h-3zM442 444h2v1h-2zM442 445h3v1h-3zM445 187h2v1h-2zM445 188h3v1h-3zM445 211h2v1h-2zM445 212h3v1h-3zM445 468h2v1h-2zM445 469h3v1h-3zM445 444h2v1h-2zM445 445h3v1h-3zM448 187h2v1h-2zM448 188h3v1h-3zM448 211h2v1h-2zM448 212h3v1h-3zM448 467h2v1h-2zM448 468h3v1h-3zM448 444h2v1h-2zM448 445h3v1h-3zM451 187h2v1h-2zM451 188h3v1h-3zM451 211h2v1h-2zM451 212h3v1h-3zM451 467h2v1h-2zM451 468h3v1h-3zM451 444h2v1h-2zM451 445h3v1h-3zM454 187h2v1h-2zM454 188h3v1h-3zM454 211h2v1h-2zM454 212h3v1h-3zM454 467h2v1h-2zM454 468h3v1h-3zM454 443h2v1h-2zM454 444h3v1h-3zM457 188h2v1h-2zM457 189h3v1h-3zM457 211h2v1h-2zM457 212h3v1h-3zM457 467h2v1h-2zM457 468h3v1h-3zM457 443h2v1h-2zM457 444h3v1h-3zM460 188h2v1h-2zM460 189h3v1h-3zM460 211h2v1h-2zM460 212h3v1h-3zM460 466h2v1h-2zM460 467h3v1h-3zM460 443h2v1h-2zM460 444h3v1h-3zM463 188h2v1h-2zM463 189h3v1h-3zM463 211h2v1h-2zM463 212h3v1h-3zM463 466h2v1h-2zM463 467h3v1h-3zM463 443h2v1h-2zM463 444h3v1h-3zM466 188h2v1h-2zM466 189h3v1h-3zM466 211h2v1h-2zM466 212h3v1h-3zM466 466h2v1h-2zM466 467h3v1h-3zM466 443h2v1h-2zM466 444h3v1h-3zM469 188h2v1h-2zM469 189h3v1h-3zM469 211h2v1h-2zM469 212h3v1h-3zM469 466h2v1h-2zM469 467h3v1h-3zM469 443h2v1h-2zM469 444h3v1h-3zM472 188h2v1h-2zM472 189h3v1h-3zM472 211h2v1h-2zM472 212h3v1h-3zM472 466h2v1h-2zM472 467h3v1h-3zM472 443h2v1h-2zM472 444h3v1h-3zM475 188h2v1h-2zM475 189h3v1h-3zM475 211h2v1h-2zM475 212h3v1h-3zM475 465h2v1h-2zM475 466h3v1h-3zM475 442h2v1h-2zM475 443h3v1h-3zM478 189h2v1h-2zM478 190h3v1h-3zM478 212h2v1h-2zM478 213h3v1h-3zM478 465h2v1h-2zM478 466h3v1h-3zM478 442h2v1h-2zM478 443h3v1h-3zM481 189h2v1h-2zM481 190h3v1h-3zM481 212h2v1h-2zM481 213h3v1h-3zM481 465h2v1h-2zM481 466h3v1h-3zM481 442h2v1h-2zM481 443h3v1h-3zM484 189h2v1h-2zM484 190h3v1h-3zM484 212h2v1h-2zM484 213h3v1h-3zM484 465h2v1h-2zM484 466h3v1h-3zM484 442h2v1h-2zM484 443h3v1h-3zM487 189h2v1h-2zM487 190h3v1h-3zM487 212h2v1h-2zM487 213h3v1h-3zM487 465h2v1h-2zM487 466h3v1h-3zM487 442h2v1h-2zM487 443h3v1h-3zM490 189h2v1h-2zM490 190h3v1h-3zM490 212h2v1h-2zM490 213h3v1h-3zM490 464h2v1h-2zM490 465h3v1h-3zM490 442h2v1h-2zM490 443h3v1h-3zM493 189h2v1h-2zM493 190h3v1h-3zM493 212h2v1h-2zM493 213h3v1h-3zM493 464h2v1h-2zM493 465h3v1h-3zM493 441h2v1h-2zM493 442h3v1h-3zM496 190h2v1h-2zM496 191h3v1h-3zM496 212h2v1h-2zM496 213h3v1h-3zM496 464h2v1h-2zM496 465h3v1h-3zM496 441h2v1h-2zM496 442h3v1h-3zM499 190h2v1h-2zM499 191h3v1h-3zM499 213h2v1h-2zM499 214h3v1h-3zM499 464h2v1h-2zM499 465h3v1h-3zM499 441h2v1h-2zM499 442h3v1h-3zM502 190h2v1h-2zM502 191h3v1h-3zM502 213h2v1h-2zM502 214h3v1h-3zM502 464h2v1h-2zM502 465h3v1h-3zM502 441h2v1h-2zM502 442h3v1h-3zM505 190h2v1h-2zM505 191h3v1h-3zM505 213h2v1h-2zM505 214h3v1h-3zM505 464h2v1h-2zM505 465h3v1h-3zM505 441h2v1h-2zM505 442h3v1h-3zM508 190h2v1h-2zM508 191h3v1h-3zM508 213h2v1h-2zM508 214h3v1h-3zM508 463h2v1h-2zM508 464h3v1h-3zM508 441h2v1h-2zM508 442h3v1h-3zM511 191h2v1h-2zM511 192h3v1h-3zM511 213h2v1h-2zM511 214h3v1h-3zM511 463h2v1h-2zM511 464h3v1h-3zM511 441h2v1h-2zM511 442h3v1h-3zM514 191h2v1h-2zM514 192h3v1h-3zM514 213h2v1h-2zM514 214h3v1h-3zM514 463h2v1h-2zM514 464h3v1h-3zM514 441h2v1h-2zM514 442h3v1h-3zM517 191h2v1h-2zM517 192h3v1h-3zM517 214h2v1h-2zM517 215h3v1h-3zM517 463h2v1h-2zM517 464h3v1h-3zM517 440h2v1h-2zM517 441h3v1h-3zM520 191h2v1h-2zM520 192h3v1h-3zM520 214h2v1h-2zM520 215h3v1h-3zM520 463h2v1h-2zM520 464h3v1h-3zM520 440h2v1h-2zM520 441h3v1h-3zM523 192h2v1h-2zM523 193h3v1h-3zM523 214h2v1h-2zM523 215h3v1h-3zM523 463h2v1h-2zM523 464h3v1h-3zM523 440h2v1h-2zM523 441h3v1h-3zM526 192h2v1h-2zM526 193h3v1h-3zM526 214h2v1h-2zM526 215h3v1h-3zM526 462h2v1h-2zM526 463h3v1h-3zM526 440h2v1h-2zM526 441h3v1h-3zM529 192h2v1h-2zM529 193h3v1h-3zM529 214h2v1h-2zM529 215h3v1h-3zM529 462h2v1h-2zM529 463h3v1h-3zM529 440h2v1h-2zM529 441h3v1h-3zM532 192h2v1h-2zM532 193h3v1h-3zM532 214h2v1h-2zM532 215h3v1h-3zM532 462h2v1h-2zM532 463h3v1h-3zM532 440h2v1h-2zM532 441h3v1h-3zM535 192h2v1h-2zM535 193h3v1h-3zM535 215h2v1h-2zM535 216h3v1h-3zM535 462h2v1h-2zM535 463h3v1h-3zM535 440h2v1h-2zM535 441h3v1h-3zM538 193h2v1h-2zM538 194h3v1h-3zM538 215h2v1h-2zM538 216h3v1h-3zM538 462h2v1h-2zM538 463h3v1h-3zM538 440h2v1h-2zM538 441h3v1h-3zM541 193h2v1h-2zM541 194h3v1h-3zM541 215h2v1h-2zM541 216h3v1h-3zM541 462h2v1h-2zM541 463h3v1h-3zM541 440h2v1h-2zM541 441h3v1h-3zM544 193h2v1h-2zM544 194h3v1h-3zM544 215h2v1h-2zM544 216h3v1h-3zM544 462h2v1h-2zM544 463h3v1h-3zM544 440h2v1h-2zM544 441h3v1h-3zM547 193h2v1h-2zM547 194h3v1h-3zM547 215h2v1h-2zM547 216h3v1h-3zM547 462h2v1h-2zM547 463h3v1h-3zM547 439h2v1h-2zM547 440h3v1h-3zM550 194h2v1h-2zM550 195h3v1h-3zM550 216h2v1h-2zM550 217h3v1h-3zM550 461h2v1h-2zM550 462h3v1h-3zM550 439h2v1h-2zM550 440h3v1h-3zM553 194h2v1h-2zM553 195h3v1h-3zM553 216h2v1h-2zM553 217h3v1h-3zM553 461h2v1h-2zM553 462h3v1h-3zM553 439h2v1h-2zM553 440h3v1h-3zM556 194h2v1h-2zM556 195h3v1h-3zM556 216h2v1h-2zM556 217h3v1h-3zM556 461h2v1h-2zM556 462h3v1h-3zM556 439h2v1h-2zM556 440h3v1h-3zM559 194h2v1h-2zM559 195h3v1h-3zM559 216h2v1h-2zM559 217h3v1h-3zM559 461h2v1h-2zM559 462h3v1h-3zM559 439h2v1h-2zM559 440h3v1h-3zM562 195h2v1h-2zM562 196h3v1h-3zM562 217h2v1h-2zM562 218h3v1h-3zM562 461h2v1h-2zM562 462h3v1h-3zM562 439h2v1h-2zM562 440h3v1h-3zM565 195h2v1h-2zM565 196h3v1h-3zM565 217h2v1h-2zM565 218h3v1h-3zM565 461h2v1h-2zM565 462h3v1h-3zM565 439h2v1h-2zM565 440h3v1h-3zM568 195h2v1h-2zM568 196h3v1h-3zM568 217h2v1h-2zM568 218h3v1h-3zM568 461h2v1h-2zM568 462h3v1h-3zM568 439h2v1h-2zM568 440h3v1h-3zM571 195h2v1h-2zM571 196h3v1h-3zM571 217h2v1h-2zM571 218h3v1h-3zM571 461h2v1h-2zM571 462h3v1h-3zM571 439h2v1h-2zM571 440h3v1h-3zM574 196h2v1h-2zM574 197h3v1h-3zM574 217h2v1h-2zM574 218h3v1h-3zM574 461h2v1h-2zM574 462h3v1h-3zM574 439h2v1h-2zM574 440h3v1h-3zM577 196h2v1h-2zM577 197h3v1h-3zM577 218h2v1h-2zM577 219h3v1h-3zM577 460h2v1h-2zM577 461h3v1h-3zM577 439h2v1h-2zM577 440h3v1h-3zM580 196h2v1h-2zM580 197h3v1h-3zM580 218h2v1h-2zM580 219h3v1h-3zM580 460h2v1h-2zM580 461h3v1h-3zM580 439h2v1h-2zM580 440h3v1h-3zM583 196h2v1h-2zM583 197h3v1h-3zM583 218h2v1h-2zM583 219h3v1h-3zM583 460h2v1h-2zM583 461h3v1h-3zM583 439h2v1h-2zM583 440h3v1h-3zM586 197h2v1h-2zM586 198h3v1h-3zM586 218h2v1h-2zM586 219h3v1h-3zM586 460h2v1h-2zM586 461h3v1h-3zM586 438h2v1h-2zM586 439h3v1h-3zM589 197h2v1h-2zM589 198h3v1h-3zM589 219h2v1h-2zM589 220h3v1h-3zM589 460h2v1h-2zM589 461h3v1h-3zM589 438h2v1h-2zM589 439h3v1h-3zM592 197h2v1h-2zM592 198h3v1h-3zM592 219h2v1h-2zM592 220h3v1h-3zM592 460h2v1h-2zM592 461h3v1h-3zM592 438h2v1h-2zM592 439h3v1h-3zM595 197h2v1h-2zM595 198h3v1h-3zM595 219h2v1h-2zM595 220h3v1h-3zM595 460h2v1h-2zM595 461h3v1h-3zM595 438h2v1h-2zM595 439h3v1h-3zM598 198h2v1h-2zM598 199h3v1h-3zM598 219h2v1h-2zM598 220h3v1h-3zM598 460h2v1h-2zM598 461h3v1h-3zM598 438h2v1h-2zM598 439h3v1h-3zM601 198h2v1h-2zM601 199h3v1h-3zM601 220h2v1h-2zM601 221h3v1h-3zM601 460h2v1h-2zM601 461h3v1h-3zM601 438h2v1h-2zM601 439h3v1h-3zM604 198h2v1h-2zM604 199h3v1h-3zM604 220h2v1h-2zM604 221h3v1h-3zM604 460h2v1h-2zM604 461h3v1h-3zM604 438h2v1h-2zM604 439h3v1h-3zM607 198h2v1h-2zM607 199h3v1h-3zM607 220h2v1h-2zM607 221h3v1h-3zM607 460h2v1h-2zM607 461h3v1h-3zM607 438h2v1h-2zM607 439h3v1h-3zM610 199h2v1h-2zM610 200h3v1h-3zM610 220h2v1h-2zM610 221h3v1h-3zM610 460h2v1h-2zM610 461h3v1h-3zM610 438h2v1h-2zM610 439h3v1h-3zM613 199h2v1h-2zM613 200h3v1h-3zM613 221h2v1h-2zM613 222h3v1h-3zM613 460h2v1h-2zM613 461h3v1h-3zM613 438h2v1h-2zM613 439h3v1h-3zM616 199h2v1h-2zM616 200h3v1h-3zM616 221h2v1h-2zM616 222h3v1h-3zM616 459h2v1h-2zM616 460h3v1h-3zM616 438h2v1h-2zM616 439h3v1h-3zM619 199h2v1h-2zM619 200h3v1h-3zM619 221h2v1h-2zM619 222h3v1h-3zM619 459h2v1h-2zM619 460h3v1h-3zM619 438h2v1h-2zM619 439h3v1h-3zM622 200h2v1h-2zM622 201h3v1h-3zM622 221h2v1h-2zM622 222h3v1h-3zM622 459h2v1h-2zM622 460h3v1h-3zM622 438h2v1h-2zM622 439h3v1h-3zM625 200h2v1h-2zM625 201h3v1h-3zM625 222h2v1h-2zM625 223h3v1h-3zM625 459h2v1h-2zM625 460h3v1h-3zM625 438h2v1h-2zM625 439h3v1h-3zM628 200h2v1h-2zM628 201h3v1h-3zM628 222h2v1h-2zM628 223h3v1h-3zM628 459h2v1h-2zM628 460h3v1h-3zM628 438h2v1h-2zM628 439h3v1h-3zM631 200h2v1h-2zM631 201h3v1h-3zM631 222h2v1h-2zM631 223h3v1h-3zM631 459h2v1h-2zM631 460h3v1h-3zM631 438h2v1h-2zM631 439h3v1h-3zM634 201h2v1h-2zM634 202h3v1h-3zM634 222h2v1h-2zM634 223h3v1h-3zM634 459h2v1h-2zM634 460h3v1h-3zM634 437h2v1h-2zM634 438h3v1h-3zM637 201h2v1h-2zM637 202h3v1h-3zM637 223h2v1h-2zM637 224h3v1h-3zM637 459h2v1h-2zM637 460h3v1h-3zM637 437h2v1h-2zM637 438h3v1h-3zM640 201h2v1h-2zM640 202h3v1h-3zM640 223h2v1h-2zM640 224h3v1h-3zM640 459h2v1h-2zM640 460h3v1h-3zM640 437h2v1h-2zM640 438h3v1h-3zM643 201h2v1h-2zM643 202h3v1h-3zM643 223h2v1h-2zM643 224h3v1h-3zM643 459h2v1h-2zM643 460h3v1h-3zM643 437h2v1h-2zM643 438h3v1h-3zM646 202h2v1h-2zM646 203h3v1h-3zM646 223h2v1h-2zM646 224h3v1h-3zM646 459h2v1h-2zM646 460h3v1h-3zM646 437h2v1h-2zM646 438h3v1h-3zM649 202h2v1h-2zM649 203h3v1h-3zM649 223h2v1h-2zM649 224h3v1h-3zM649 459h2v1h-2zM649 460h3v1h-3zM649 437h2v1h-2zM649 438h3v1h-3zM652 202h2v1h-2zM652 203h3v1h-3zM652 224h2v1h-2zM652 225h3v1h-3zM652 459h2v1h-2zM652 460h3v1h-3zM652 437h2v1h-2zM652 438h3v1h-3zM655 202h2v1h-2zM655 203h3v1h-3zM655 224h2v1h-2zM655 225h3v1h-3zM655 459h2v1h-2zM655 460h3v1h-3zM655 437h2v1h-2zM655 438h3v1h-3zM658 202h2v1h-2zM658 203h3v1h-3zM658 224h2v1h-2zM658 225h3v1h-3zM658 459h2v1h-2zM658 460h3v1h-3zM658 437h2v1h-2zM658 438h3v1h-3zM661 203h2v1h-2zM661 204h3v1h-3zM661 224h2v1h-2zM661 225h3v1h-3zM661 459h2v1h-2zM661 460h3v1h-3zM661 437h2v1h-2zM661 438h3v1h-3zM664 203h2v1h-2zM664 204h3v1h-3zM664 225h2v1h-2zM664 226h3v1h-3zM664 459h2v1h-2zM664 460h3v1h-3zM664 437h2v1h-2zM664 438h3v1h-3zM667 203h2v1h-2zM667 204h3v1h-3zM667 225h2v1h-2zM667 226h3v1h-3zM667 459h2v1h-2zM667 460h3v1h-3zM667 437h2v1h-2zM667 438h3v1h-3zM670 203h2v1h-2zM670 204h3v1h-3zM670 225h2v1h-2zM670 226h3v1h-3zM670 458h2v1h-2zM670 459h3v1h-3zM670 437h2v1h-2zM670 438h3v1h-3zM673 203h2v1h-2zM673 204h3v1h-3zM673 225h2v1h-2zM673 226h3v1h-3zM673 458h2v1h-2zM673 459h3v1h-3zM673 437h2v1h-2zM673 438h3v1h-3zM676 204h2v1h-2zM676 205h3v1h-3zM676 225h2v1h-2zM676 226h3v1h-3zM676 458h2v1h-2zM676 459h3v1h-3zM676 437h2v1h-2zM676 438h3v1h-3zM679 204h2v1h-2zM679 205h3v1h-3zM679 226h2v1h-2zM679 227h3v1h-3zM679 458h2v1h-2zM679 459h3v1h-3zM679 437h2v1h-2zM679 438h3v1h-3zM682 204h2v1h-2zM682 205h3v1h-3zM682 226h2v1h-2zM682 227h3v1h-3zM682 458h2v1h-2zM682 459h3v1h-3zM682 436h2v1h-2zM682 437h3v1h-3zM685 204h2v1h-2zM685 205h3v1h-3zM685 226h2v1h-2zM685 227h3v1h-3zM685 458h2v1h-2zM685 459h3v1h-3zM685 436h2v1h-2zM685 437h3v1h-3zM688 204h2v1h-2zM688 205h3v1h-3zM688 226h2v1h-2zM688 227h3v1h-3zM688 458h2v1h-2zM688 459h3v1h-3zM688 436h2v1h-2zM688 437h3v1h-3zM691 205h2v1h-2zM691 206h3v1h-3zM691 227h2v1h-2zM691 228h3v1h-3zM691 458h2v1h-2zM691 459h3v1h-3zM691 436h2v1h-2zM691 437h3v1h-3zM694 205h2v1h-2zM694 206h3v1h-3zM694 227h2v1h-2zM694 228h3v1h-3zM694 458h2v1h-2zM694 459h3v1h-3zM694 436h2v1h-2zM694 437h3v1h-3zM697 205h2v1h-2zM697 206h3v1h-3zM697 227h2v1h-2zM697 228h3v1h-3zM697 458h2v1h-2zM697 459h3v1h-3zM697 436h2v1h-2zM697 437h3v1h-3zM700 205h2v1h-2zM700 206h3v1h-3zM700 227h2v1h-2zM700 228h3v1h-3zM700 458h2v1h-2zM700 459h3v1h-3zM700 436h2v1h-2zM700 437h3v1h-3zM703 205h2v1h-2zM703 206h3v1h-3zM703 227h2v1h-2zM703 228h3v1h-3zM703 458h2v1h-2zM703 459h3v1h-3zM703 436h2v1h-2zM703 437h3v1h-3zM706 205h2v1h-2zM706 206h3v1h-3zM706 227h2v1h-2zM706 228h3v1h-3zM706 458h2v1h-2zM706 459h3v1h-3zM706 436h2v1h-2zM706 437h3v1h-3zM709 206h2v1h-2zM709 207h3v1h-3zM709 228h2v1h-2zM709 229h3v1h-3zM709 458h2v1h-2zM709 459h3v1h-3zM709 436h2v1h-2zM709 437h3v1h-3zM712 206h2v1h-2zM712 207h3v1h-3zM712 228h2v1h-2zM712 229h3v1h-3zM712 458h2v1h-2zM712 459h3v1h-3zM712 436h2v1h-2zM712 437h3v1h-3zM715 206h2v1h-2zM715 207h3v1h-3zM715 228h2v1h-2zM715 229h3v1h-3zM715 458h2v1h-2zM715 459h3v1h-3zM715 436h2v1h-2zM715 437h3v1h-3zM718 206h2v1h-2zM718 207h3v1h-3zM718 228h2v1h-2zM718 229h3v1h-3zM718 458h2v1h-2zM718 459h3v1h-3zM718 436h2v1h-2zM718 437h3v1h-3zM721 206h2v1h-2zM721 207h3v1h-3zM721 228h2v1h-2zM721 229h3v1h-3zM721 458h2v1h-2zM721 459h3v1h-3zM721 435h2v1h-2zM721 436h3v1h-3z"/>
<path fill="#000" d="M52 152h1v3h-1z M52 508h1v3h-1zM73 152h1v3h-1z M73 508h1v3h-1zM94 152h1v3h-1z M94 508h1v3h-1zM115 152h1v3h-1z M115 508h1v3h-1zM136 152h1v3h-1z M136 508h1v3h-1zM157 152h1v3h-1z M157 508h1v3h-1zM178 152h1v3h-1z M178 508h1v3h-1zM199 152h1v3h-1z M199 508h1v3h-1zM220 152h1v3h-1z M220 508h1v3h-1zM241 152h1v3h-1z M241 508h1v3h-1zM262 152h1v3h-1z M262 508h1v3h-1zM283 152h1v3h-1z M283 508h1v3h-1zM304 152h1v3h-1z M304 508h1v3h-1zM325 152h1v3h-1z M325 508h1v3h-1zM346 152h1v3h-1z M346 508h1v3h-1zM367 152h1v3h-1z M367 508h1v3h-1zM388 152h1v3h-1z M388 508h1v3h-1zM409 152h1v3h-1z M409 508h1v3h-1zM430 152h1v3h-1z M430 508h1v3h-1zM451 152h1v3h-1z M451 508h1v3h-1zM472 152h1v3h-1z M472 508h1v3h-1zM493 152h1v3h-1z M493 508h1v3h-1zM514 152h1v3h-1z M514 508h1v3h-1zM535 152h1v3h-1z M535 508h1v3h-1zM556 152h1v3h-1z M556 508h1v3h-1zM577 152h1v3h-1z M577 508h1v3h-1zM598 152h1v3h-1z M598 508h1v3h-1zM619 152h1v3h-1z M619 508h1v3h-1zM640 152h1v3h-1z M640 508h1v3h-1zM661 152h1v3h-1z M661 508h1v3h-1zM682 152h1v3h-1z M682 508h1v3h-1zM703 152h1v3h-1z M703 508h1v3h-1zM43 170h3v1h-3z M720 170h3v1h-3zM43 188h3v1h-3z M720 188h3v1h-3zM43 206h3v1h-3z M720 206h3v1h-3zM43 224h3v1h-3z M720 224h3v1h-3zM43 242h3v1h-3z M720 242h3v1h-3zM43 260h3v1h-3z M720 260h3v1h-3zM43 278h3v1h-3z M720 278h3v1h-3zM43 296h3v1h-3z M720 296h3v1h-3zM43 314h3v1h-3z M720 314h3v1h-3zM43 332h3v1h-3z M720 332h3v1h-3zM43 350h3v1h-3z M720 350h3v1h-3zM43 368h3v1h-3z M720 368h3v1h-3zM43 386h3v1h-3z M720 386h3v1h-3zM43 404h3v1h-3z M720 404h3v1h-3zM43 422h3v1h-3z M720 422h3v1h-3zM43 440h3v1h-3z M720 440h3v1h-3zM43 458h3v1h-3z M720 458h3v1h-3zM43 476h3v1h-3z M720 476h3v1h-3zM43 494h3v1h-3z M720 494h3v1h-3z"/>
<rect x="723" y="151" width="1" height="361" fill="#000"/>
<rect x="42" y="511" width="682" height="1" fill="#000"/>
</g>
<text x="32.8" y="156" font-size="11" text-anchor="middle" fill="#000" font-weight="normal" filter="url(#cr)" >22</text>
<text x="736.8" y="156" font-size="11" text-anchor="middle" fill="#000" font-weight="normal" filter="url(#cr)" >20</text>
<text x="32.8" y="174" font-size="11" text-anchor="middle" fill="#000" font-weight="normal" filter="url(#cr)" >21</text>
<text x="736.8" y="174" font-size="11" text-anchor="middle" fill="#000" font-weight="normal" filter="url(#cr)" >19</text>
<text x="32.8" y="192" font-size="11" text-anchor="middle" fill="#000" font-weight="normal" filter="url(#cr)" >20</text>
<text x="736.8" y="192" font-size="11" text-anchor="middle" fill="#000" font-weight="normal" filter="url(#cr)" >18</text>
<text x="32.8" y="210" font-size="11" text-anchor="middle" fill="#000" font-weight="normal" filter="url(#cr)" >19</text>
<text x="736.8" y="210" font-size="11" text-anchor="middle" fill="#000" font-weight="normal" filter="url(#cr)" >17</text>
<text x="32.8" y="228" font-size="11" text-anchor="middle" fill="#000" font-weight="normal" filter="url(#cr)" >18</text>
<text x="736.8" y="228" font-size="11" text-anchor="middle" fill="#000" font-weight="normal" filter="url(#cr)" >16</text>
<text x="32.8" y="246" font-size="11" text-anchor="middle" fill="#000" font-weight="normal" filter="url(#cr)" >17</text>
<text x="736.8" y="246" font-size="11" text-anchor="middle" fill="#000" font-weight="normal" filter="url(#cr)" >15</text>
<text x="32.8" y="264" font-size="11" text-anchor="middle" fill="#000" font-weight="normal" filter="url(#cr)" >16</text>
<text x="736.8" y="264" font-size="11" text-anchor="middle" fill="#000" font-weight="normal" filter="url(#cr)" >14</text>
<text x="32.8" y="282" font-size="11" text-anchor="middle" fill="#000" font-weight="normal" filter="url(#cr)" >15</text>
<text x="736.8" y="282" font-size="11" text-anchor="middle" fill="#000" font-weight="normal" filter="url(#cr)" >13</text>
<text x="32.8" y="300" font-size="11" text-anchor="middle" fill="#000" font-weight="normal" filter="url(#cr)" >14</text>
<text x="736.8" y="300" font-size="11" text-anchor="middle" fill="#000" font-weight="normal" filter="url(#cr)" >12</text>
<text x="32.8" y="318" font-size="11" text-anchor="middle" fill="#000" font-weight="normal" filter="url(#cr)" >13</text>
<text x="736.8" y="318" font-size="11" text-anchor="middle" fill="#000" font-weight="normal" filter="url(#cr)" >11</text>
<text x="32.8" y="336" font-size="11" text-anchor="middle" fill="#000" font-weight="normal" filter="url(#cr)" >12</text>
<text x="736.8" y="336" font-size="11" text-anchor="middle" fill="#000" font-weight="normal" filter="url(#cr)" >10</text>
<text x="32.8" y="354" font-size="11" text-anchor="middle" fill="#000" font-weight="normal" filter="url(#cr)" >11</text>
<text x="736.8" y="354" font-size="11" text-anchor="middle" fill="#000" font-weight="normal" filter="url(#cr)" >9</text>
<text x="32.8" y="372" font-size="11" text-anchor="middle" fill="#000" font-weight="normal" filter="url(#cr)" >10</text>
<text x="736.8" y="372" font-size="11" text-anchor="middle" fill="#000" font-weight="normal" filter="url(#cr)" >8</text>
<text x="32.8" y="390" font-size="11" text-anchor="middle" fill="#000" font-weight="normal" filter="url(#cr)" >9</text>
<text x="736.8" y="390" font-size="11" text-anchor="middle" fill="#000" font-weight="normal" filter="url(#cr)" >7</text>
<text x="32.8" y="408" font-size="11" text-anchor="middle" fill="#000" font-weight="normal" filter="url(#cr)" >8</text>
<text x="736.8" y="408" font-size="11" text-anchor="middle" fill="#000" font-weight="normal" filter="url(#cr)" >6</text>
<text x="32.8" y="426" font-size="11" text-anchor="middle" fill="#000" font-weight="normal" filter="url(#cr)" >7</text>
<text x="736.8" y="426" font-size="11" text-anchor="middle" fill="#000" font-weight="normal" filter="url(#cr)" >5</text>
<text x="32.8" y="444" font-size="11" text-anchor="middle" fill="#000" font-weight="normal" filter="url(#cr)" >6</text>
<text x="736.8" y="444" font-size="11" text-anchor="middle" fill="#000" font-weight="normal" filter="url(#cr)" >4</text>
<text x="32.8" y="462" font-size="11" text-anchor="middle" fill="#000" font-weight="normal" filter="url(#cr)" >5</text>
<text x="736.8" y="462" font-size="11" text-anchor="middle" fill="#000" font-weight="normal" filter="url(#cr)" >3</text>
<text x="32.8" y="480" font-size="11" text-anchor="middle" fill="#000" font-weight="normal" filter="url(#cr)" >4</text>
<text x="736.8" y="480" font-size="11" text-anchor="middle" fill="#000" font-weight="normal" filter="url(#cr)" >2</text>
<text x="32.8" y="498" font-size="11" text-anchor="middle" fill="#000" font-weight="normal" filter="url(#cr)" >3</text>
<text x="736.8" y="498" font-size="11" text-anchor="middle" fill="#000" font-weight="normal" filter="url(#cr)" >1</text>
<text x="32.8" y="516" font-size="11" text-anchor="middle" fill="#000" font-weight="normal" filter="url(#cr)" >2</text>
<text x="736.8" y="516" font-size="11" text-anchor="middle" fill="#000" font-weight="normal" filter="url(#cr)" >0</text>
<text x="18" y="213" font-size="11" text-anchor="middle" fill="#000" font-weight="normal" filter="url(#cr)" >L</text>
<text x="18" y="239" font-size="11" text-anchor="middle" fill="#000" font-weight="normal" filter="url(#cr)" >O</text>
<text x="18" y="265" font-size="11" text-anchor="middle" fill="#000" font-weight="normal" filter="url(#cr)" >C</text>
<text x="18" y="291" font-size="11" text-anchor="middle" fill="#000" font-weight="normal" filter="url(#cr)" >A</text>
<text x="18" y="317" font-size="11" text-anchor="middle" fill="#000" font-weight="normal" filter="url(#cr)" >L</text>
<text x="18" y="369" font-size="11" text-anchor="middle" fill="#000" font-weight="normal" filter="url(#cr)" >T</text>
<text x="18" y="395" font-size="11" text-anchor="middle" fill="#000" font-weight="normal" filter="url(#cr)" >I</text>
<text x="18" y="421" font-size="11" text-anchor="middle" fill="#000" font-weight="normal" filter="url(#cr)" >M</text>
<text x="18" y="447" font-size="11" text-anchor="middle" fill="#000" font-weight="normal" filter="url(#cr)" >E</text>
<text x="754" y="174" font-size="11" text-anchor="middle" fill="#000" font-weight="normal" filter="url(#cr)" >U</text>
<text x="754" y="198" font-size="11" text-anchor="middle" fill="#000" font-weight="normal" filter="url(#cr)" >N</text>
<text x="754" y="222" font-size="11" text-anchor="middle" fill="#000" font-weight="normal" filter="url(#cr)" >I</text>
<text x="754" y="246" font-size="11" text-anchor="middle" fill="#000" font-weight="normal" filter="url(#cr)" >V</text>
<text x="754" y="270" font-size="11" text-anchor="middle" fill="#000" font-weight="normal" filter="url(#cr)" >E</text>
<text x="754" y="294" font-size="11" text-anchor="middle" fill="#000" font-weight="normal" filter="url(#cr)" >R</text>
<text x="754" y="318" font-size="11" text-anchor="middle" fill="#000" font-weight="normal" filter="url(#cr)" >S</text>
<text x="754" y="342" font-size="11" text-anchor="middle" fill="#000" font-weight="normal" filter="url(#cr)" >A</text>
<text x="754" y="366" font-size="11" text-anchor="middle" fill="#000" font-weight="normal" filter="url(#cr)" >L</text>
<text x="754" y="414" font-size="11" text-anchor="middle" fill="#000" font-weight="normal" filter="url(#cr)" >T</text>
<text x="754" y="438" font-size="11" text-anchor="middle" fill="#000" font-weight="normal" filter="url(#cr)" >I</text>
<text x="754" y="462" font-size="11" text-anchor="middle" fill="#000" font-weight="normal" filter="url(#cr)" >M</text>
<text x="754" y="486" font-size="11" text-anchor="middle" fill="#000" font-weight="normal" filter="url(#cr)" >E</text>
<text x="53.5" y="529" font-size="11" text-anchor="middle" fill="#000" font-weight="normal" filter="url(#cr)" >Sep 18</text>
<text x="95.5" y="529" font-size="11" text-anchor="middle" fill="#000" font-weight="normal" filter="url(#cr)" >Oct 02</text>
<text x="137.5" y="529" font-size="11" text-anchor="middle" fill="#000" font-weight="normal" filter="url(#cr)" >Oct 16</text>
<text x="179.5" y="529" font-size="11" text-anchor="middle" fill="#000" font-weight="normal" filter="url(#cr)" >Oct 30</text>
<text x="221.5" y="529" font-size="11" text-anchor="middle" fill="#000" font-weight="normal" filter="url(#cr)" >Nov 13</text>
<text x="263.5" y="529" font-size="11" text-anchor="middle" fill="#000" font-weight="normal" filter="url(#cr)" >Nov 27</text>
<text x="305.5" y="529" font-size="11" text-anchor="middle" fill="#000" font-weight="normal" filter="url(#cr)" >Dec 11</text>
<text x="347.5" y="529" font-size="11" text-anchor="middle" fill="#000" font-weight="normal" filter="url(#cr)" >Dec 25</text>
<text x="389.5" y="529" font-size="11" text-anchor="middle" fill="#000" font-weight="normal" filter="url(#cr)" >Jan 08</text>
<text x="431.5" y="529" font-size="11" text-anchor="middle" fill="#000" font-weight="normal" filter="url(#cr)" >Jan 22</text>
<text x="473.5" y="529" font-size="11" text-anchor="middle" fill="#000" font-weight="normal" filter="url(#cr)" >Feb 05</text>
<text x="515.5" y="529" font-size="11" text-anchor="middle" fill="#000" font-weight="normal" filter="url(#cr)" >Feb 19</text>
<text x="557.5" y="529" font-size="11" text-anchor="middle" fill="#000" font-weight="normal" filter="url(#cr)" >Mar 05</text>
<text x="599.5" y="529" font-size="11" text-anchor="middle" fill="#000" font-weight="normal" filter="url(#cr)" >Mar 19</text>
<text x="641.5" y="529" font-size="11" text-anchor="middle" fill="#000" font-weight="normal" filter="url(#cr)" >Apr 02</text>
<text x="683.5" y="529" font-size="11" text-anchor="middle" fill="#000" font-weight="normal" filter="url(#cr)" >Apr 16</text>
<text x="725.5" y="529" font-size="11" text-anchor="middle" fill="#000" font-weight="normal" filter="url(#cr)" >Apr 30</text>
<text x="754" y="529" font-size="11" text-anchor="start" fill="#000" font-weight="normal" filter="url(#cr)" >rf</text>
<text x="30.5" y="542" font-size="11" text-anchor="middle" fill="#000" font-weight="normal" filter="url(#cr)" >2005</text>
<text x="74.5" y="542" font-size="11" text-anchor="middle" fill="#000" font-weight="normal" filter="url(#cr)" >Sep 25</text>
<text x="116.5" y="542" font-size="11" text-anchor="middle" fill="#000" font-weight="normal" filter="url(#cr)" >Oct 09</text>
<text x="158.5" y="542" font-size="11" text-anchor="middle" fill="#000" font-weight="normal" filter="url(#cr)" >Oct 23</text>
<text x="200.5" y="542" font-size="11" text-anchor="middle" fill="#000" font-weight="normal" filter="url(#cr)" >Nov 06</text>
<text x="242.5" y="542" font-size="11" text-anchor="middle" fill="#000" font-weight="normal" filter="url(#cr)" >Nov 20</text>
<text x="284.5" y="542" font-size="11" text-anchor="middle" fill="#000" font-weight="normal" filter="url(#cr)" >Dec 04</text>
<text x="326.5" y="542" font-size="11" text-anchor="middle" fill="#000" font-weight="normal" filter="url(#cr)" >Dec 18</text>
<text x="368.5" y="542" font-size="11" text-anchor="middle" fill="#000" font-weight="normal" filter="url(#cr)" >Jan 01</text>
<text x="410.5" y="542" font-size="11" text-anchor="middle" fill="#000" font-weight="normal" filter="url(#cr)" >Jan 15</text>
<text x="452.5" y="542" font-size="11" text-anchor="middle" fill="#000" font-weight="normal" filter="url(#cr)" >Jan 29</text>
<text x="494.5" y="542" font-size="11" text-anchor="middle" fill="#000" font-weight="normal" filter="url(#cr)" >Feb 12</text>
<text x="536.5" y="542" font-size="11" text-anchor="middle" fill="#000" font-weight="normal" filter="url(#cr)" >Feb 26</text>
<text x="578.5" y="542" font-size="11" text-anchor="middle" fill="#000" font-weight="normal" filter="url(#cr)" >Mar 12</text>
<text x="620.5" y="542" font-size="11" text-anchor="middle" fill="#000" font-weight="normal" filter="url(#cr)" >Mar 26</text>
<text x="662.5" y="542" font-size="11" text-anchor="middle" fill="#000" font-weight="normal" filter="url(#cr)" >Apr 09</text>
<text x="704.5" y="542" font-size="11" text-anchor="middle" fill="#000" font-weight="normal" filter="url(#cr)" >Apr 23</text>
<text x="744" y="542" font-size="11" text-anchor="middle" fill="#000" font-weight="normal" filter="url(#cr)" >2006</text>
<rect x="761" y="103" width="1" height="471" fill="#F1EFE2"/>
<rect x="762" y="103" width="1" height="472" fill="#FFFFFF"/>
<rect x="763" y="103" width="3" height="472" fill="#ECE9D8"/>
<rect x="11" y="544" width="750" height="1" fill="#FFFFFF"/>
<rect x="11" y="545" width="750" height="13" fill="#ECE9D8"/>
<rect x="11" y="545" width="14" height="13" fill="#ECE9D8"/>
<rect x="11" y="545" width="14" height="1" fill="#FFFFFF"/>
<rect x="11" y="545" width="1" height="13" fill="#FFFFFF"/>
<rect x="11" y="557" width="14" height="1" fill="#716F64"/>
<rect x="24" y="545" width="1" height="13" fill="#716F64"/>
<rect x="12" y="556" width="12" height="1" fill="#ACA899"/>
<rect x="23" y="546" width="1" height="11" fill="#ACA899"/>
<rect x="25" y="545" width="1" height="13" fill="#000"/>
<path d="M15 551.5l4-4v8z" fill="#000"/>
<rect x="26" y="545" width="3" height="13" fill="#FFFFFF"/>
<rect x="741" y="545" width="1" height="13" fill="#000"/>
<rect x="742" y="545" width="5" height="13" fill="#E4E2D8"/>
<rect x="747" y="545" width="14" height="13" fill="#ECE9D8"/>
<rect x="747" y="545" width="14" height="1" fill="#FFFFFF"/>
<rect x="747" y="545" width="1" height="13" fill="#FFFFFF"/>
<rect x="747" y="557" width="14" height="1" fill="#716F64"/>
<rect x="760" y="545" width="1" height="13" fill="#716F64"/>
<rect x="748" y="556" width="12" height="1" fill="#ACA899"/>
<rect x="759" y="546" width="1" height="11" fill="#ACA899"/>
<rect x="760" y="545" width="1" height="13" fill="#000"/>
<path d="M756 551.5l-4-4v8z" fill="#000"/>
<rect x="11" y="558" width="750" height="1" fill="#000"/>
<rect x="11" y="559" width="750" height="13" fill="#FFF5D8"/>
<rect x="11" y="572" width="750" height="1" fill="#000"/>
<text x="15.32" y="570" font-size="11" fill="#000" font-weight="normal" textLength="79.24" lengthAdjust="spacingAndGlyphs" filter="url(#cr)">Mask:  Rainbow</text>
<text x="303.32" y="570" font-size="11" fill="#000" font-weight="normal" textLength="167.72" lengthAdjust="spacingAndGlyphs" filter="url(#cr)">Night when Sun below -18 degrees</text>
</svg>
</body></html>
